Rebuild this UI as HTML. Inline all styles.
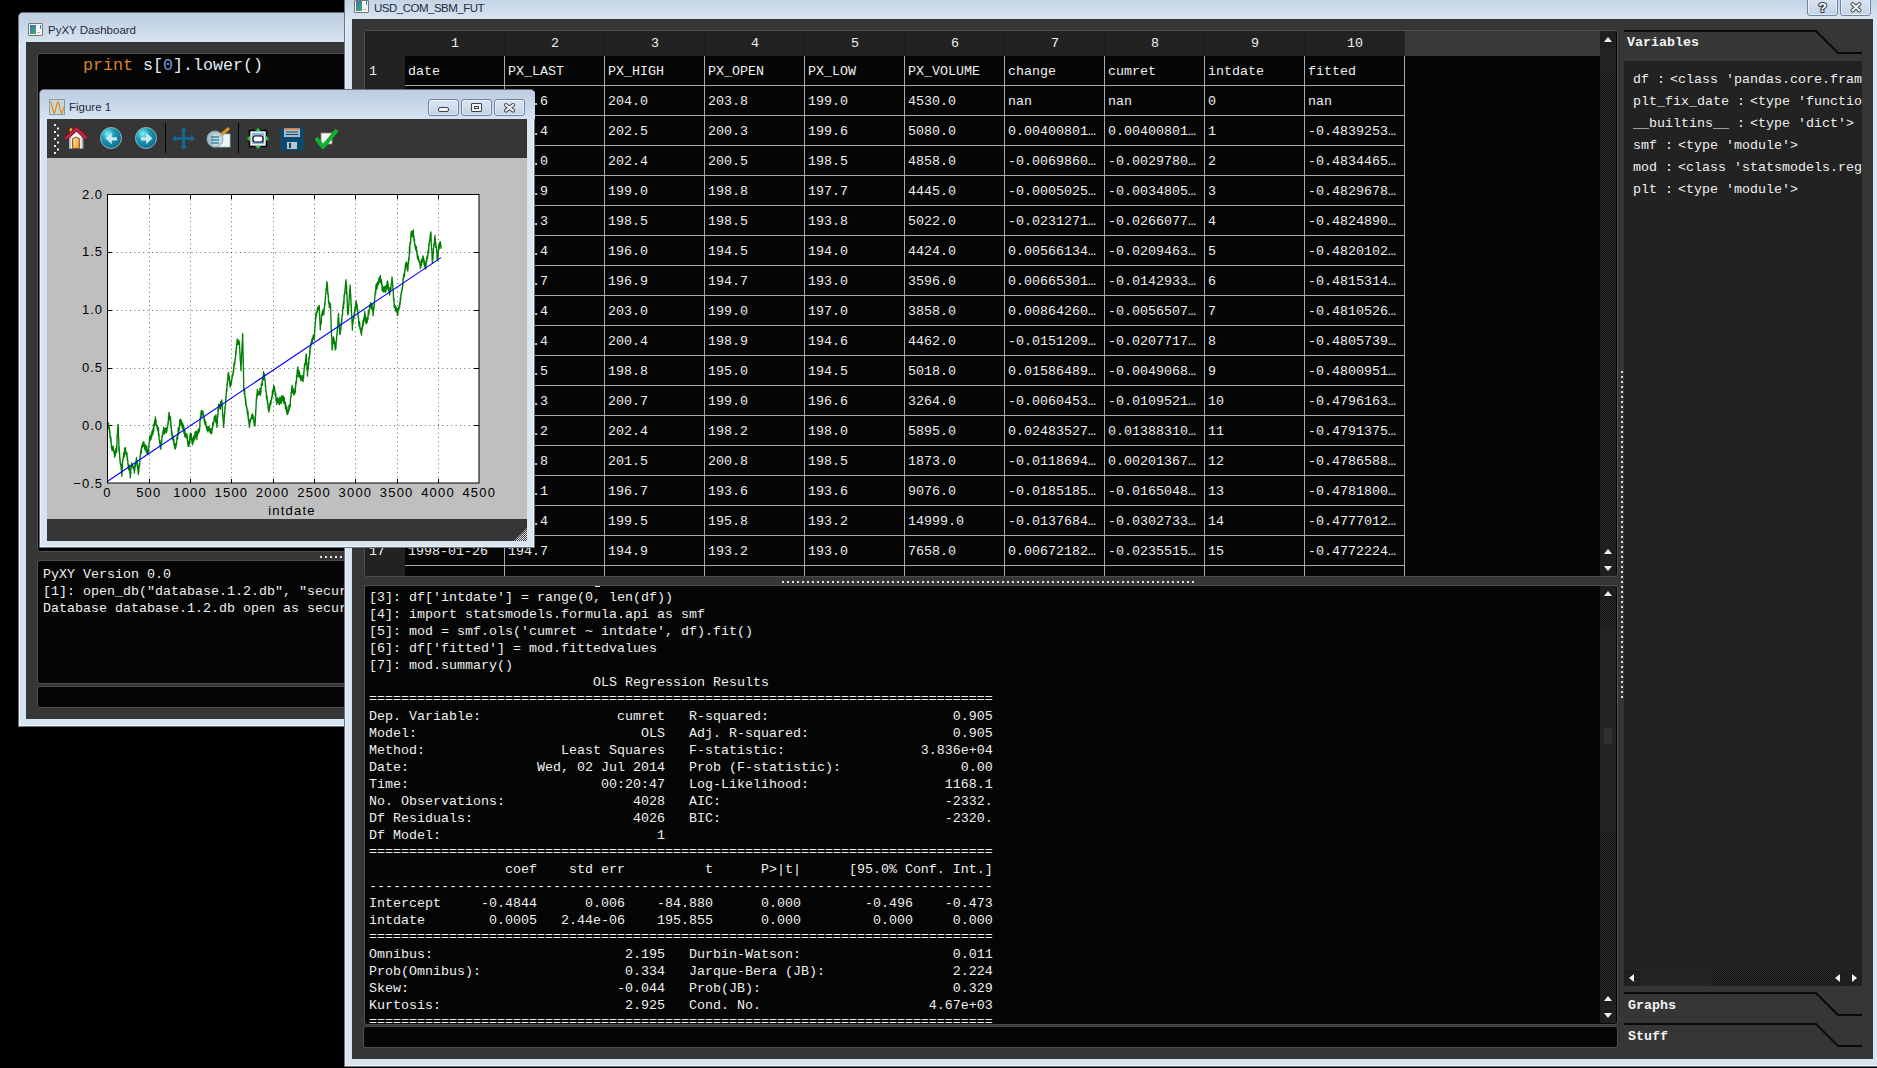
<!DOCTYPE html><html><head><meta charset="utf-8"><style>
*{margin:0;padding:0;box-sizing:border-box}
html,body{width:1877px;height:1068px;overflow:hidden;background:#000;position:relative}
.a{position:absolute}
.mono{font-family:"Liberation Mono", monospace;font-size:13.33px;color:#f0f0f0;white-space:pre;line-height:17px}
.sans{font-family:"Liberation Sans", sans-serif}
.win{position:absolute;border:1px solid #6b7078;border-radius:5px 5px 0 0;
  background:#d7e4f2;box-shadow:inset 0 0 0 1px #eef4fa}
.tbar{position:absolute;left:0;right:0;top:0;background:linear-gradient(#bccde0,#d6e3f1)}
.dark{position:absolute;background:#363636}
.blk{position:absolute;background:#050505;border:1px solid #4e4e4e;border-radius:3px}
.ttl{position:absolute;font-family:"Liberation Sans", sans-serif;font-size:11.5px;line-height:14px;color:#262a40;white-space:pre}
</style></head><body>
<div class="win" style="left:18px;top:12px;width:342px;height:715px;"></div>
<div class="a tbar" style="left:19px;top:13px;width:340px;height:29px;border-radius:4px 4px 0 0"></div>
<div class="a" style="left:26px;top:42px;width:333px;height:677px;background:#363636"></div>
<div class="a" style="left:28px;top:23px;width:15px;height:13px;background:#f4f4f4;border:1px solid #777;border-radius:1px"></div>
<div class="a" style="left:30px;top:25px;width:6px;height:9px;background:linear-gradient(135deg,#3a6fb8,#3fae6a)"></div>
<div class="a" style="left:40px;top:25px;width:1px;height:4px;background:linear-gradient(#2a60c0,#30b050)"></div>
<div class="a" style="left:37px;top:32px;width:3px;height:1px;background:#b0b0b0"></div>
<div class="ttl" style="left:48px;top:23px;">PyXY Dashboard</div>
<div class="blk" style="left:37px;top:53px;width:322px;height:499px;"></div>
<div class="a mono" style="left:83px;top:56px;font-size:16.67px;line-height:20px;color:#d9822b">print</div>
<div class="a mono" style="left:143px;top:56px;font-size:16.67px;line-height:20px;color:#e6eef6">s[</div>
<div class="a mono" style="left:163px;top:56px;font-size:16.67px;line-height:20px;color:#6a9fd8">0</div>
<div class="a mono" style="left:173px;top:56px;font-size:16.67px;line-height:20px;color:#e6eef6">].lower()</div>
<div class="blk" style="left:37px;top:560px;width:322px;height:124px;"></div>
<div class="a mono" style="left:43px;top:566px;">PyXY Version 0.0
[1]: open_db(&quot;database.1.2.db&quot;, &quot;securities&quot;)
Database database.1.2.db open as securities</div>
<div class="blk" style="left:37px;top:686px;width:322px;height:22px;"></div>
<div class="a" style="left:320px;top:556px;width:25px;height:2px;background:repeating-linear-gradient(90deg,#e0e0e0 0 2px,transparent 2px 5px)"></div>
<div class="win" style="left:344px;top:-10px;width:1535px;height:1077px;border-radius:5px 5px 0 0"></div>
<div class="a tbar" style="left:345px;top:-9px;width:1532px;height:28px;"></div>
<div class="a" style="left:352px;top:19px;width:1521px;height:1040px;background:#363636"></div>
<div class="a" style="left:354px;top:0px;width:15px;height:13px;background:#f4f4f4;border:1px solid #777;border-radius:1px"></div>
<div class="a" style="left:356px;top:1px;width:6px;height:10px;background:linear-gradient(135deg,#3a6fb8,#3fae6a)"></div>
<div class="a" style="left:366px;top:1px;width:1px;height:4px;background:linear-gradient(#2a60c0,#30b050)"></div>
<div class="a" style="left:363px;top:9px;width:3px;height:1px;background:#b0b0b0"></div>
<div class="ttl" style="left:374px;top:1px;letter-spacing:-0.5px">USD_COM_SBM_FUT</div>
<div class="a" style="left:364px;top:30px;width:1254px;height:547px;background:#050505;border:1px solid #4e4e4e;border-radius:3px;overflow:hidden"></div>
<div class="a" style="left:365px;top:31px;width:40px;height:25px;background:#222"></div>
<div class="a" style="left:405px;top:31px;width:1000px;height:25px;background:#222"></div>
<div class="a" style="left:1405px;top:31px;width:195px;height:25px;background:#383838"></div>
<div class="a" style="left:365px;top:56px;width:40px;height:520px;background:#222"></div>
<div class="a mono" style="left:451px;top:35px;">1</div>
<div class="a mono" style="left:551px;top:35px;">2</div>
<div class="a" style="left:504px;top:31px;width:1px;height:25px;background:#1c1c1c"></div>
<div class="a mono" style="left:651px;top:35px;">3</div>
<div class="a" style="left:604px;top:31px;width:1px;height:25px;background:#1c1c1c"></div>
<div class="a mono" style="left:751px;top:35px;">4</div>
<div class="a" style="left:704px;top:31px;width:1px;height:25px;background:#1c1c1c"></div>
<div class="a mono" style="left:851px;top:35px;">5</div>
<div class="a" style="left:804px;top:31px;width:1px;height:25px;background:#1c1c1c"></div>
<div class="a mono" style="left:951px;top:35px;">6</div>
<div class="a" style="left:904px;top:31px;width:1px;height:25px;background:#1c1c1c"></div>
<div class="a mono" style="left:1051px;top:35px;">7</div>
<div class="a" style="left:1004px;top:31px;width:1px;height:25px;background:#1c1c1c"></div>
<div class="a mono" style="left:1151px;top:35px;">8</div>
<div class="a" style="left:1104px;top:31px;width:1px;height:25px;background:#1c1c1c"></div>
<div class="a mono" style="left:1251px;top:35px;">9</div>
<div class="a" style="left:1204px;top:31px;width:1px;height:25px;background:#1c1c1c"></div>
<div class="a mono" style="left:1347px;top:35px;">10</div>
<div class="a" style="left:1304px;top:31px;width:1px;height:25px;background:#1c1c1c"></div>
<div class="a mono" style="left:369px;top:63px;">1</div>
<div class="a mono" style="left:369px;top:93px;">2</div>
<div class="a mono" style="left:369px;top:123px;">3</div>
<div class="a mono" style="left:369px;top:153px;">4</div>
<div class="a mono" style="left:369px;top:183px;">5</div>
<div class="a mono" style="left:369px;top:213px;">6</div>
<div class="a mono" style="left:369px;top:243px;">7</div>
<div class="a mono" style="left:369px;top:273px;">8</div>
<div class="a mono" style="left:369px;top:303px;">9</div>
<div class="a mono" style="left:369px;top:333px;">10</div>
<div class="a mono" style="left:369px;top:363px;">11</div>
<div class="a mono" style="left:369px;top:393px;">12</div>
<div class="a mono" style="left:369px;top:423px;">13</div>
<div class="a mono" style="left:369px;top:453px;">14</div>
<div class="a mono" style="left:369px;top:483px;">15</div>
<div class="a mono" style="left:369px;top:513px;">16</div>
<div class="a mono" style="left:369px;top:543px;">17</div>
<div class="a mono" style="left:408px;top:63px;">date</div>
<div class="a mono" style="left:508px;top:63px;">PX_LAST</div>
<div class="a mono" style="left:608px;top:63px;">PX_HIGH</div>
<div class="a mono" style="left:708px;top:63px;">PX_OPEN</div>
<div class="a mono" style="left:808px;top:63px;">PX_LOW</div>
<div class="a mono" style="left:908px;top:63px;">PX_VOLUME</div>
<div class="a mono" style="left:1008px;top:63px;">change</div>
<div class="a mono" style="left:1108px;top:63px;">cumret</div>
<div class="a mono" style="left:1208px;top:63px;">intdate</div>
<div class="a mono" style="left:1308px;top:63px;">fitted</div>
<div class="a mono" style="left:508px;top:93px;">196.6</div>
<div class="a mono" style="left:608px;top:93px;">204.0</div>
<div class="a mono" style="left:708px;top:93px;">203.8</div>
<div class="a mono" style="left:808px;top:93px;">199.0</div>
<div class="a mono" style="left:908px;top:93px;">4530.0</div>
<div class="a mono" style="left:1008px;top:93px;">nan</div>
<div class="a mono" style="left:1108px;top:93px;">nan</div>
<div class="a mono" style="left:1208px;top:93px;">0</div>
<div class="a mono" style="left:1308px;top:93px;">nan</div>
<div class="a mono" style="left:508px;top:123px;">196.4</div>
<div class="a mono" style="left:608px;top:123px;">202.5</div>
<div class="a mono" style="left:708px;top:123px;">200.3</div>
<div class="a mono" style="left:808px;top:123px;">199.6</div>
<div class="a mono" style="left:908px;top:123px;">5080.0</div>
<div class="a mono" style="left:1008px;top:123px;">0.00400801…</div>
<div class="a mono" style="left:1108px;top:123px;">0.00400801…</div>
<div class="a mono" style="left:1208px;top:123px;">1</div>
<div class="a mono" style="left:1308px;top:123px;">-0.4839253…</div>
<div class="a mono" style="left:508px;top:153px;">196.0</div>
<div class="a mono" style="left:608px;top:153px;">202.4</div>
<div class="a mono" style="left:708px;top:153px;">200.5</div>
<div class="a mono" style="left:808px;top:153px;">198.5</div>
<div class="a mono" style="left:908px;top:153px;">4858.0</div>
<div class="a mono" style="left:1008px;top:153px;">-0.0069860…</div>
<div class="a mono" style="left:1108px;top:153px;">-0.0029780…</div>
<div class="a mono" style="left:1208px;top:153px;">2</div>
<div class="a mono" style="left:1308px;top:153px;">-0.4834465…</div>
<div class="a mono" style="left:508px;top:183px;">196.9</div>
<div class="a mono" style="left:608px;top:183px;">199.0</div>
<div class="a mono" style="left:708px;top:183px;">198.8</div>
<div class="a mono" style="left:808px;top:183px;">197.7</div>
<div class="a mono" style="left:908px;top:183px;">4445.0</div>
<div class="a mono" style="left:1008px;top:183px;">-0.0005025…</div>
<div class="a mono" style="left:1108px;top:183px;">-0.0034805…</div>
<div class="a mono" style="left:1208px;top:183px;">3</div>
<div class="a mono" style="left:1308px;top:183px;">-0.4829678…</div>
<div class="a mono" style="left:508px;top:213px;">196.3</div>
<div class="a mono" style="left:608px;top:213px;">198.5</div>
<div class="a mono" style="left:708px;top:213px;">198.5</div>
<div class="a mono" style="left:808px;top:213px;">193.8</div>
<div class="a mono" style="left:908px;top:213px;">5022.0</div>
<div class="a mono" style="left:1008px;top:213px;">-0.0231271…</div>
<div class="a mono" style="left:1108px;top:213px;">-0.0266077…</div>
<div class="a mono" style="left:1208px;top:213px;">4</div>
<div class="a mono" style="left:1308px;top:213px;">-0.4824890…</div>
<div class="a mono" style="left:508px;top:243px;">196.4</div>
<div class="a mono" style="left:608px;top:243px;">196.0</div>
<div class="a mono" style="left:708px;top:243px;">194.5</div>
<div class="a mono" style="left:808px;top:243px;">194.0</div>
<div class="a mono" style="left:908px;top:243px;">4424.0</div>
<div class="a mono" style="left:1008px;top:243px;">0.00566134…</div>
<div class="a mono" style="left:1108px;top:243px;">-0.0209463…</div>
<div class="a mono" style="left:1208px;top:243px;">5</div>
<div class="a mono" style="left:1308px;top:243px;">-0.4820102…</div>
<div class="a mono" style="left:508px;top:273px;">196.7</div>
<div class="a mono" style="left:608px;top:273px;">196.9</div>
<div class="a mono" style="left:708px;top:273px;">194.7</div>
<div class="a mono" style="left:808px;top:273px;">193.0</div>
<div class="a mono" style="left:908px;top:273px;">3596.0</div>
<div class="a mono" style="left:1008px;top:273px;">0.00665301…</div>
<div class="a mono" style="left:1108px;top:273px;">-0.0142933…</div>
<div class="a mono" style="left:1208px;top:273px;">6</div>
<div class="a mono" style="left:1308px;top:273px;">-0.4815314…</div>
<div class="a mono" style="left:508px;top:303px;">196.4</div>
<div class="a mono" style="left:608px;top:303px;">203.0</div>
<div class="a mono" style="left:708px;top:303px;">199.0</div>
<div class="a mono" style="left:808px;top:303px;">197.0</div>
<div class="a mono" style="left:908px;top:303px;">3858.0</div>
<div class="a mono" style="left:1008px;top:303px;">0.00864260…</div>
<div class="a mono" style="left:1108px;top:303px;">-0.0056507…</div>
<div class="a mono" style="left:1208px;top:303px;">7</div>
<div class="a mono" style="left:1308px;top:303px;">-0.4810526…</div>
<div class="a mono" style="left:508px;top:333px;">196.4</div>
<div class="a mono" style="left:608px;top:333px;">200.4</div>
<div class="a mono" style="left:708px;top:333px;">198.9</div>
<div class="a mono" style="left:808px;top:333px;">194.6</div>
<div class="a mono" style="left:908px;top:333px;">4462.0</div>
<div class="a mono" style="left:1008px;top:333px;">-0.0151209…</div>
<div class="a mono" style="left:1108px;top:333px;">-0.0207717…</div>
<div class="a mono" style="left:1208px;top:333px;">8</div>
<div class="a mono" style="left:1308px;top:333px;">-0.4805739…</div>
<div class="a mono" style="left:508px;top:363px;">196.5</div>
<div class="a mono" style="left:608px;top:363px;">198.8</div>
<div class="a mono" style="left:708px;top:363px;">195.0</div>
<div class="a mono" style="left:808px;top:363px;">194.5</div>
<div class="a mono" style="left:908px;top:363px;">5018.0</div>
<div class="a mono" style="left:1008px;top:363px;">0.01586489…</div>
<div class="a mono" style="left:1108px;top:363px;">-0.0049068…</div>
<div class="a mono" style="left:1208px;top:363px;">9</div>
<div class="a mono" style="left:1308px;top:363px;">-0.4800951…</div>
<div class="a mono" style="left:508px;top:393px;">196.3</div>
<div class="a mono" style="left:608px;top:393px;">200.7</div>
<div class="a mono" style="left:708px;top:393px;">199.0</div>
<div class="a mono" style="left:808px;top:393px;">196.6</div>
<div class="a mono" style="left:908px;top:393px;">3264.0</div>
<div class="a mono" style="left:1008px;top:393px;">-0.0060453…</div>
<div class="a mono" style="left:1108px;top:393px;">-0.0109521…</div>
<div class="a mono" style="left:1208px;top:393px;">10</div>
<div class="a mono" style="left:1308px;top:393px;">-0.4796163…</div>
<div class="a mono" style="left:508px;top:423px;">196.2</div>
<div class="a mono" style="left:608px;top:423px;">202.4</div>
<div class="a mono" style="left:708px;top:423px;">198.2</div>
<div class="a mono" style="left:808px;top:423px;">198.0</div>
<div class="a mono" style="left:908px;top:423px;">5895.0</div>
<div class="a mono" style="left:1008px;top:423px;">0.02483527…</div>
<div class="a mono" style="left:1108px;top:423px;">0.01388310…</div>
<div class="a mono" style="left:1208px;top:423px;">11</div>
<div class="a mono" style="left:1308px;top:423px;">-0.4791375…</div>
<div class="a mono" style="left:508px;top:453px;">196.8</div>
<div class="a mono" style="left:608px;top:453px;">201.5</div>
<div class="a mono" style="left:708px;top:453px;">200.8</div>
<div class="a mono" style="left:808px;top:453px;">198.5</div>
<div class="a mono" style="left:908px;top:453px;">1873.0</div>
<div class="a mono" style="left:1008px;top:453px;">-0.0118694…</div>
<div class="a mono" style="left:1108px;top:453px;">0.00201367…</div>
<div class="a mono" style="left:1208px;top:453px;">12</div>
<div class="a mono" style="left:1308px;top:453px;">-0.4786588…</div>
<div class="a mono" style="left:508px;top:483px;">196.1</div>
<div class="a mono" style="left:608px;top:483px;">196.7</div>
<div class="a mono" style="left:708px;top:483px;">193.6</div>
<div class="a mono" style="left:808px;top:483px;">193.6</div>
<div class="a mono" style="left:908px;top:483px;">9076.0</div>
<div class="a mono" style="left:1008px;top:483px;">-0.0185185…</div>
<div class="a mono" style="left:1108px;top:483px;">-0.0165048…</div>
<div class="a mono" style="left:1208px;top:483px;">13</div>
<div class="a mono" style="left:1308px;top:483px;">-0.4781800…</div>
<div class="a mono" style="left:508px;top:513px;">196.4</div>
<div class="a mono" style="left:608px;top:513px;">199.5</div>
<div class="a mono" style="left:708px;top:513px;">195.8</div>
<div class="a mono" style="left:808px;top:513px;">193.2</div>
<div class="a mono" style="left:908px;top:513px;">14999.0</div>
<div class="a mono" style="left:1008px;top:513px;">-0.0137684…</div>
<div class="a mono" style="left:1108px;top:513px;">-0.0302733…</div>
<div class="a mono" style="left:1208px;top:513px;">14</div>
<div class="a mono" style="left:1308px;top:513px;">-0.4777012…</div>
<div class="a mono" style="left:408px;top:543px;">1998-01-26</div>
<div class="a mono" style="left:508px;top:543px;">194.7</div>
<div class="a mono" style="left:608px;top:543px;">194.9</div>
<div class="a mono" style="left:708px;top:543px;">193.2</div>
<div class="a mono" style="left:808px;top:543px;">193.0</div>
<div class="a mono" style="left:908px;top:543px;">7658.0</div>
<div class="a mono" style="left:1008px;top:543px;">0.00672182…</div>
<div class="a mono" style="left:1108px;top:543px;">-0.0235515…</div>
<div class="a mono" style="left:1208px;top:543px;">15</div>
<div class="a mono" style="left:1308px;top:543px;">-0.4772224…</div>
<div class="a" style="left:405px;top:85px;width:1000px;height:1px;background:#a9a9a9"></div>
<div class="a" style="left:405px;top:115px;width:1000px;height:1px;background:#a9a9a9"></div>
<div class="a" style="left:405px;top:145px;width:1000px;height:1px;background:#a9a9a9"></div>
<div class="a" style="left:405px;top:175px;width:1000px;height:1px;background:#a9a9a9"></div>
<div class="a" style="left:405px;top:205px;width:1000px;height:1px;background:#a9a9a9"></div>
<div class="a" style="left:405px;top:235px;width:1000px;height:1px;background:#a9a9a9"></div>
<div class="a" style="left:405px;top:265px;width:1000px;height:1px;background:#a9a9a9"></div>
<div class="a" style="left:405px;top:295px;width:1000px;height:1px;background:#a9a9a9"></div>
<div class="a" style="left:405px;top:325px;width:1000px;height:1px;background:#a9a9a9"></div>
<div class="a" style="left:405px;top:355px;width:1000px;height:1px;background:#a9a9a9"></div>
<div class="a" style="left:405px;top:385px;width:1000px;height:1px;background:#a9a9a9"></div>
<div class="a" style="left:405px;top:415px;width:1000px;height:1px;background:#a9a9a9"></div>
<div class="a" style="left:405px;top:445px;width:1000px;height:1px;background:#a9a9a9"></div>
<div class="a" style="left:405px;top:475px;width:1000px;height:1px;background:#a9a9a9"></div>
<div class="a" style="left:405px;top:505px;width:1000px;height:1px;background:#a9a9a9"></div>
<div class="a" style="left:405px;top:535px;width:1000px;height:1px;background:#a9a9a9"></div>
<div class="a" style="left:405px;top:565px;width:1000px;height:1px;background:#a9a9a9"></div>
<div class="a" style="left:504px;top:56px;width:1px;height:520px;background:#a9a9a9"></div>
<div class="a" style="left:604px;top:56px;width:1px;height:520px;background:#a9a9a9"></div>
<div class="a" style="left:704px;top:56px;width:1px;height:520px;background:#a9a9a9"></div>
<div class="a" style="left:804px;top:56px;width:1px;height:520px;background:#a9a9a9"></div>
<div class="a" style="left:904px;top:56px;width:1px;height:520px;background:#a9a9a9"></div>
<div class="a" style="left:1004px;top:56px;width:1px;height:520px;background:#a9a9a9"></div>
<div class="a" style="left:1104px;top:56px;width:1px;height:520px;background:#a9a9a9"></div>
<div class="a" style="left:1204px;top:56px;width:1px;height:520px;background:#a9a9a9"></div>
<div class="a" style="left:1304px;top:56px;width:1px;height:520px;background:#a9a9a9"></div>
<div class="a" style="left:1404px;top:56px;width:1px;height:520px;background:#a9a9a9"></div>
<div class="a" style="left:1600px;top:31px;width:16px;height:545px;background:#2a2a2a"></div>
<div class="a" style="left:782px;top:581px;width:415px;height:2px;background:repeating-linear-gradient(90deg,#e0e0e0 0 2px,transparent 2px 5px)"></div>
<div class="a" style="left:1600px;top:31px;width:16px;height:545px;background-color:#121212;background-image:repeating-conic-gradient(#2e2e2e 0 25%,#121212 0 50%);background-size:2px 2px"></div>
<svg class="a" style="left:1600px;top:32px" width="16" height="16"><rect x="0" y="0" width="16" height="16" rx="3" fill="#1f1f1f"/><path d="M4,10 L8,5 L12,10 Z" fill="#f2f2f2"/></svg>
<div class="a" style="left:1600px;top:48px;width:16px;height:25px;background:#242424"></div>
<svg class="a" style="left:1600px;top:544px" width="16" height="16"><rect x="0" y="0" width="16" height="16" rx="3" fill="#1f1f1f"/><path d="M4,10 L8,5 L12,10 Z" fill="#f2f2f2"/></svg>
<svg class="a" style="left:1600px;top:560px" width="16" height="16"><rect x="0" y="0" width="16" height="16" rx="3" fill="#1f1f1f"/><path d="M4,6 L8,11 L12,6 Z" fill="#f2f2f2"/></svg>
<div class="blk" style="left:364px;top:585px;width:1254px;height:440px;"></div>
<div class="a" style="left:365px;top:586px;width:1235px;height:437px;overflow:hidden">
<div class="a mono" style="left:4px;top:-14px">
[3]: df[&#x27;intdate&#x27;] = range(0, len(df))
[4]: import statsmodels.formula.api as smf
[5]: mod = smf.ols(&#x27;cumret ~ intdate&#x27;, df).fit()
[6]: df[&#x27;fitted&#x27;] = mod.fittedvalues
[7]: mod.summary()
                            OLS Regression Results                            
<span style="position:relative;top:-1px">==============================================================================</span>
Dep. Variable:                 cumret   R-squared:                       0.905
Model:                            OLS   Adj. R-squared:                  0.905
Method:                 Least Squares   F-statistic:                 3.836e+04
Date:                Wed, 02 Jul 2014   Prob (F-statistic):               0.00
Time:                        00:20:47   Log-Likelihood:                 1168.1
No. Observations:                4028   AIC:                            -2332.
Df Residuals:                    4026   BIC:                            -2320.
Df Model:                           1                                         
<span style="position:relative;top:-1px">==============================================================================</span>
                 coef    std err          t      P&gt;|t|      [95.0% Conf. Int.]
------------------------------------------------------------------------------
Intercept     -0.4844      0.006    -84.880      0.000        -0.496    -0.473
intdate        0.0005   2.44e-06    195.855      0.000         0.000     0.000
<span style="position:relative;top:-1px">==============================================================================</span>
Omnibus:                        2.195   Durbin-Watson:                   0.011
Prob(Omnibus):                  0.334   Jarque-Bera (JB):                2.224
Skew:                          -0.044   Prob(JB):                        0.329
Kurtosis:                       2.925   Cond. No.                     4.67e+03
<span style="position:relative;top:-1px">==============================================================================</span></div>
</div>
<div class="a" style="left:1600px;top:586px;width:16px;height:437px;background-color:#121212;background-image:repeating-conic-gradient(#2e2e2e 0 25%,#121212 0 50%);background-size:2px 2px"></div>
<svg class="a" style="left:1600px;top:586px" width="16" height="16"><rect x="0" y="0" width="16" height="16" rx="3" fill="#1f1f1f"/><path d="M4,10 L8,5 L12,10 Z" fill="#f2f2f2"/></svg>
<div class="a" style="left:1600px;top:628px;width:16px;height:204px;background:#242424"></div>
<div class="a" style="left:1604px;top:728px;width:8px;height:16px;background-image:repeating-conic-gradient(#3a3a3a 0 25%,#242424 0 50%);background-size:2px 2px"></div>
<svg class="a" style="left:1600px;top:991px" width="16" height="16"><rect x="0" y="0" width="16" height="16" rx="3" fill="#1f1f1f"/><path d="M4,10 L8,5 L12,10 Z" fill="#f2f2f2"/></svg>
<svg class="a" style="left:1600px;top:1007px" width="16" height="16"><rect x="0" y="0" width="16" height="16" rx="3" fill="#1f1f1f"/><path d="M4,6 L8,11 L12,6 Z" fill="#f2f2f2"/></svg>
<div class="blk" style="left:363px;top:1026px;width:1255px;height:22px;"></div>
<div class="a" style="left:595px;top:586px;width:5px;height:1px;background:#e8e8e8"></div>
<div class="a" style="left:1621px;top:371px;width:2px;height:330px;background:repeating-linear-gradient(180deg,#e0e0e0 0 2px,transparent 2px 5px)"></div>
<svg class="a" style="left:1624px;top:29px" width="240" height="26"><path d="M0,2 L192,2 L214,24 L238,24" stroke="#0a0a0a" stroke-width="2" fill="none"/></svg>
<div class="a mono" style="left:1627px;top:34px;font-weight:bold;color:#f4f4f4">Variables</div>
<div class="a" style="left:1624px;top:61px;width:238px;height:909px;background:#222"></div>
<div class="a" style="left:1624px;top:61px;width:238px;height:909px;overflow:hidden">
<div class="a mono" style="left:9px;top:10px">df :</div>
<div class="a mono" style="left:46px;top:10px">&lt;class &#x27;pandas.core.frame.DataFrame&#x27;&gt;</div>
<div class="a mono" style="left:9px;top:32px">plt_fix_date :</div>
<div class="a mono" style="left:126px;top:32px">&lt;type &#x27;function&#x27;&gt;</div>
<div class="a mono" style="left:9px;top:54px">__builtins__ :</div>
<div class="a mono" style="left:126px;top:54px">&lt;type &#x27;dict&#x27;&gt;</div>
<div class="a mono" style="left:9px;top:76px">smf :</div>
<div class="a mono" style="left:54px;top:76px">&lt;type &#x27;module&#x27;&gt;</div>
<div class="a mono" style="left:9px;top:98px">mod :</div>
<div class="a mono" style="left:54px;top:98px">&lt;class &#x27;statsmodels.regression.linear_model.RegressionResultsWrapper&#x27;&gt;</div>
<div class="a mono" style="left:9px;top:120px">plt :</div>
<div class="a mono" style="left:54px;top:120px">&lt;type &#x27;module&#x27;&gt;</div>
</div>
<div class="a" style="left:1624px;top:970px;width:238px;height:16px;background-color:#121212;background-image:repeating-conic-gradient(#2e2e2e 0 25%,#121212 0 50%);background-size:2px 2px"></div>
<svg class="a" style="left:1624px;top:970px" width="16" height="16"><rect x="0" y="0" width="16" height="16" rx="3" fill="#1f1f1f"/><path d="M10,4 L5,8 L10,12 Z" fill="#f2f2f2"/></svg>
<div class="a" style="left:1640px;top:970px;width:71px;height:16px;background:#242424"></div>
<svg class="a" style="left:1830px;top:970px" width="16" height="16"><rect x="0" y="0" width="16" height="16" rx="3" fill="#1f1f1f"/><path d="M10,4 L5,8 L10,12 Z" fill="#f2f2f2"/></svg>
<svg class="a" style="left:1846px;top:970px" width="16" height="16"><rect x="0" y="0" width="16" height="16" rx="3" fill="#1f1f1f"/><path d="M6,4 L11,8 L6,12 Z" fill="#f2f2f2"/></svg>
<svg class="a" style="left:1624px;top:991px" width="240" height="26"><path d="M0,2 L192,2 L214,24 L238,24" stroke="#0a0a0a" stroke-width="2" fill="none"/></svg>
<div class="a mono" style="left:1628px;top:997px;font-weight:bold;color:#f4f4f4">Graphs</div>
<svg class="a" style="left:1624px;top:1022px" width="240" height="26"><path d="M0,2 L192,2 L214,24 L238,24" stroke="#0a0a0a" stroke-width="2" fill="none"/></svg>
<div class="a mono" style="left:1628px;top:1028px;font-weight:bold;color:#f4f4f4">Stuff</div>
<div class="a" style="left:1807px;top:-3px;width:31px;height:19px;border:1px solid #6f84a4;border-radius:3px;background:linear-gradient(#dbe6f3,#c3d2e4);box-shadow:inset 0 0 0 1px rgba(255,255,255,.5)"><svg width="29" height="17" style="position:absolute;left:0;top:0"><text x="14.5" y="13.5" text-anchor="middle" font-family="Liberation Sans" font-weight="bold" font-size="13.5" fill="#ffffff" stroke="#3a3f4a" stroke-width="2.2" stroke-linejoin="round" paint-order="stroke">?</text></svg></div>
<div class="a" style="left:1840px;top:-3px;width:31px;height:19px;border:1px solid #6f84a4;border-radius:3px;background:linear-gradient(#dbe6f3,#c3d2e4);box-shadow:inset 0 0 0 1px rgba(255,255,255,.5)"><svg width="29" height="17" style="position:absolute;left:0;top:0"><path d="M11.5,6 L18.5,12.5 M18.5,6 L11.5,12.5" stroke="#3c414b" stroke-width="4" stroke-linecap="round"/><path d="M11.5,6 L18.5,12.5 M18.5,6 L11.5,12.5" stroke="#f4f4f4" stroke-width="2.2" stroke-linecap="round"/></svg></div>
<div class="win" style="left:39px;top:89px;width:496px;height:459px;"></div>
<div class="a tbar" style="left:40px;top:90px;width:495px;height:29px;border-radius:4px 4px 0 0"></div>
<div class="a" style="left:49px;top:99px;width:16px;height:16px;background:#c9d6dc;border:1px solid #8a9aa2"></div>
<svg class="a" style="left:50px;top:100px" width="14" height="14"><polyline points="0.50,2.00 0.82,2.21 1.15,2.81 1.48,3.77 1.80,5.00 2.12,6.43 2.45,7.93 2.77,9.40 3.10,10.73 3.42,11.82 3.75,12.58 4.08,12.96 4.40,12.93 4.72,12.49 5.05,11.68 5.38,10.56 5.70,9.20 6.03,7.72 6.35,6.22 6.67,4.81 7.00,3.61 7.33,2.70 7.65,2.15 7.97,2.00 8.30,2.27 8.62,2.93 8.95,3.93 9.28,5.20 9.60,6.64 9.93,8.15 10.25,9.60 10.57,10.91 10.90,11.95 11.22,12.66 11.55,12.98 11.88,12.89 12.20,12.40 12.53,11.54 12.85,10.37 13.18,8.99 13.50,7.50" stroke="#e08a10" stroke-width="1.2" fill="none"/></svg>
<div class="ttl a" style="left:69px;top:100px">Figure 1</div>
<div class="a" style="left:428px;top:99px;width:31px;height:17px;border:1px solid #6f84a4;border-radius:3px;background:linear-gradient(#dbe6f3,#c3d2e4);box-shadow:inset 0 0 0 1px rgba(255,255,255,.5)"><div style="position:absolute;left:9px;top:7px;width:11px;height:5px;background:#f2f2f2;border:1px solid #3c414b;border-radius:2px"></div></div>
<div class="a" style="left:461px;top:99px;width:31px;height:17px;border:1px solid #6f84a4;border-radius:3px;background:linear-gradient(#dbe6f3,#c3d2e4);box-shadow:inset 0 0 0 1px rgba(255,255,255,.5)"><div style="position:absolute;left:9px;top:3px;width:11px;height:9px;background:#f2f2f2;border:1px solid #3c414b;border-radius:1px"><div style="position:absolute;left:2px;top:2px;width:5px;height:3px;border:1px solid #3c414b"></div></div></div>
<div class="a" style="left:494px;top:99px;width:31px;height:17px;border:1px solid #6f84a4;border-radius:3px;background:linear-gradient(#dbe6f3,#c3d2e4);box-shadow:inset 0 0 0 1px rgba(255,255,255,.5)"><svg width="29" height="15" style="position:absolute;left:0;top:0"><path d="M11,5 L18,10.5 M18,5 L11,10.5" stroke="#3c414b" stroke-width="4" stroke-linecap="round"/><path d="M11,5 L18,10.5 M18,5 L11,10.5" stroke="#f4f4f4" stroke-width="2.2" stroke-linecap="round"/></svg></div>
<div class="a" style="left:47px;top:119px;width:480px;height:39px;background:#363636"></div>
<div class="a" style="left:47px;top:158px;width:480px;height:361px;background:#bfbfbf"></div>
<div class="a" style="left:47px;top:519px;width:480px;height:22px;background:#363636"></div>
<svg class="a" style="left:513px;top:527px" width="14" height="14"><defs><pattern id="gp" width="2" height="2" patternUnits="userSpaceOnUse"><rect width="1" height="1" fill="#e8e8e8"/><rect x="1" y="1" width="1" height="1" fill="#e8e8e8"/></pattern></defs><path d="M14,1 L14,14 L1,14 Z" fill="url(#gp)"/></svg>
<svg class="a" style="left:52px;top:122px" width="10" height="34"><g fill="#f0f0f0"><rect x="2" y="2.0" width="2" height="2"/><rect x="5" y="5.5" width="2" height="2"/><rect x="2" y="9.0" width="2" height="2"/><rect x="5" y="12.5" width="2" height="2"/><rect x="2" y="16.0" width="2" height="2"/><rect x="5" y="19.5" width="2" height="2"/><rect x="2" y="23.0" width="2" height="2"/><rect x="5" y="26.5" width="2" height="2"/><rect x="2" y="30.0" width="2" height="2"/></g></svg>
<svg class="a" style="left:64px;top:126px" width="24" height="25"><defs><linearGradient id="hw" x1="0" x2="1"><stop offset="0" stop-color="#9aa8a8"/><stop offset="0.2" stop-color="#f8f8f8"/><stop offset="0.8" stop-color="#f0f0f0"/><stop offset="1" stop-color="#8a9898"/></linearGradient><linearGradient id="hd" x1="0" y1="0" x2="1" y2="1"><stop offset="0" stop-color="#f8dca0"/><stop offset="1" stop-color="#f0a818"/></linearGradient></defs><rect x="5.3" y="2" width="3.3" height="6" fill="#f4c040" stroke="#7a1010" stroke-width="0.7"/><path d="M5,11.8 L12.5,5.3 L19.5,11.8 L19.5,23 L5,23 Z" fill="url(#hw)"/><rect x="5" y="22.6" width="14.5" height="1" fill="#204850"/><path d="M8.6,22.6 L8.6,12.5 Q12,9.8 15.3,12.5 L15.3,22.6 Z" fill="url(#hd)" stroke="#7a2010" stroke-width="0.8"/><path d="M1.5,12.8 L12.5,2.8 L22.5,12.1" stroke="#6a0818" stroke-width="4.2" fill="none" stroke-linejoin="miter"/><path d="M1.5,12.8 L12.5,2.8 L22.5,12.1" stroke="#c02848" stroke-width="2.8" fill="none" stroke-linejoin="miter"/></svg>
<svg class="a" style="left:99.6px;top:127px" width="22" height="22"><defs><radialGradient id="g110" cx="0.35" cy="0.3" r="0.8"><stop offset="0" stop-color="#7ef8ff"/><stop offset="0.4" stop-color="#1a98b2"/><stop offset="1" stop-color="#08688a"/></radialGradient></defs><circle cx="11" cy="11" r="10.5" fill="url(#g110)" stroke="#9cbccc" stroke-width="0.9"/><path d="M5.5,11.3 L11.8,5.8 L11.8,10.2 L17,10.2 L17,13.4 L11.8,13.4 L11.8,17.2 Z" fill="#cfe8ee"/></svg>
<svg class="a" style="left:135.0px;top:127px" width="22" height="22"><defs><radialGradient id="g146" cx="0.35" cy="0.3" r="0.8"><stop offset="0" stop-color="#7ef8ff"/><stop offset="0.4" stop-color="#1a98b2"/><stop offset="1" stop-color="#08688a"/></radialGradient></defs><circle cx="11" cy="11" r="10.5" fill="url(#g146)" stroke="#9cbccc" stroke-width="0.9"/><path d="M17.5,11.3 L11.2,5.8 L11.2,10.2 L6,10.2 L6,13.4 L11.2,13.4 L11.2,17.2 Z" fill="#cfe8ee"/></svg>
<div class="a" style="left:165px;top:123px;width:1px;height:30px;background:#000"></div>
<div class="a" style="left:238px;top:123px;width:1px;height:30px;background:#000"></div>
<svg class="a" style="left:172px;top:127px" width="24" height="23"><path d="M11.5,0 L15,4 L13,4 L13,10 L19,10 L19,8 L23,11.5 L19,15 L19,13 L13,13 L13,19 L15,19 L11.5,23 L8,19 L10,19 L10,13 L4,13 L4,15 L0,11.5 L4,8 L4,10 L10,10 L10,4 L8,4 Z" fill="#14688e"/></svg>
<svg class="a" style="left:206px;top:127px" width="26" height="22"><rect x="7" y="7" width="17" height="13" fill="#f2f4f8" stroke="#8cc" stroke-width="0.8"/><path d="M14,9 L22,2" stroke="#e0902a" stroke-width="3.2" stroke-linecap="round"/><circle cx="9" cy="12" r="8" fill="#bcd4dc" fill-opacity="0.85" stroke="#88a8b0" stroke-width="1"/><path d="M5,10 H13 M5,13 H13 M5,16 H13" stroke="#3c8aa0" stroke-width="1.4"/></svg>
<svg class="a" style="left:247px;top:128px" width="22" height="21"><rect x="2.5" y="2.5" width="17" height="16" fill="#eaeaea" stroke="#000" stroke-width="1.5"/><rect x="5" y="5" width="12" height="11" fill="#8ab8e8"/><rect x="6" y="8" width="10" height="6" rx="2" fill="#fff" stroke="#000" stroke-width="1.2"/><path d="M11,0 L14,3 L8,3 Z M11,21 L14,18 L8,18 Z M0,10.5 L3,7.5 L3,13.5 Z M22,10.5 L19,7.5 L19,13.5 Z" fill="#22c840"/></svg>
<svg class="a" style="left:280px;top:127px" width="24" height="24"><rect x="0.5" y="0.5" width="23" height="23" rx="3" fill="#0b4a70"/><rect x="4" y="1" width="16" height="9" fill="#a8bcc8"/><rect x="4" y="1" width="16" height="1.5" fill="#d08040"/><path d="M6,5 H18 M6,7.5 H18" stroke="#1a4a70" stroke-width="1"/><rect x="7" y="15" width="10" height="7" fill="#b8c8d0"/><rect x="9" y="16" width="2" height="5" fill="#123a5a"/></svg>
<svg class="a" style="left:315px;top:126px" width="24" height="24"><rect x="6" y="7" width="11" height="11" fill="#f4f4f4" stroke="#888" stroke-width="0.8"/><path d="M1,12 L8,21 L22,4" stroke="#10b030" stroke-width="4.2" fill="none" stroke-linejoin="round"/></svg>
<svg class="a" style="left:47px;top:158px" width="480" height="361" shape-rendering="auto"><rect x="60.5" y="36.5" width="371.5" height="288.5" fill="#fff"/><line x1="102.5" y1="37" x2="102.5" y2="325" stroke="#000" stroke-width="1" stroke-dasharray="1,3.4" stroke-opacity="0.6"/><line x1="102.5" y1="325" x2="102.5" y2="321" stroke="#000"/><line x1="102.5" y1="37" x2="102.5" y2="41" stroke="#000"/><line x1="143.5" y1="37" x2="143.5" y2="325" stroke="#000" stroke-width="1" stroke-dasharray="1,3.4" stroke-opacity="0.6"/><line x1="143.5" y1="325" x2="143.5" y2="321" stroke="#000"/><line x1="143.5" y1="37" x2="143.5" y2="41" stroke="#000"/><line x1="184.5" y1="37" x2="184.5" y2="325" stroke="#000" stroke-width="1" stroke-dasharray="1,3.4" stroke-opacity="0.6"/><line x1="184.5" y1="325" x2="184.5" y2="321" stroke="#000"/><line x1="184.5" y1="37" x2="184.5" y2="41" stroke="#000"/><line x1="226.5" y1="37" x2="226.5" y2="325" stroke="#000" stroke-width="1" stroke-dasharray="1,3.4" stroke-opacity="0.6"/><line x1="226.5" y1="325" x2="226.5" y2="321" stroke="#000"/><line x1="226.5" y1="37" x2="226.5" y2="41" stroke="#000"/><line x1="267.5" y1="37" x2="267.5" y2="325" stroke="#000" stroke-width="1" stroke-dasharray="1,3.4" stroke-opacity="0.6"/><line x1="267.5" y1="325" x2="267.5" y2="321" stroke="#000"/><line x1="267.5" y1="37" x2="267.5" y2="41" stroke="#000"/><line x1="308.5" y1="37" x2="308.5" y2="325" stroke="#000" stroke-width="1" stroke-dasharray="1,3.4" stroke-opacity="0.6"/><line x1="308.5" y1="325" x2="308.5" y2="321" stroke="#000"/><line x1="308.5" y1="37" x2="308.5" y2="41" stroke="#000"/><line x1="350.5" y1="37" x2="350.5" y2="325" stroke="#000" stroke-width="1" stroke-dasharray="1,3.4" stroke-opacity="0.6"/><line x1="350.5" y1="325" x2="350.5" y2="321" stroke="#000"/><line x1="350.5" y1="37" x2="350.5" y2="41" stroke="#000"/><line x1="391.5" y1="37" x2="391.5" y2="325" stroke="#000" stroke-width="1" stroke-dasharray="1,3.4" stroke-opacity="0.6"/><line x1="391.5" y1="325" x2="391.5" y2="321" stroke="#000"/><line x1="391.5" y1="37" x2="391.5" y2="41" stroke="#000"/><line x1="61" y1="267.5" x2="432" y2="267.5" stroke="#000" stroke-width="1" stroke-dasharray="1,3.4" stroke-opacity="0.6"/><line x1="61" y1="267.5" x2="65" y2="267.5" stroke="#000"/><line x1="427" y1="267.5" x2="432" y2="267.5" stroke="#000"/><line x1="61" y1="210.5" x2="432" y2="210.5" stroke="#000" stroke-width="1" stroke-dasharray="1,3.4" stroke-opacity="0.6"/><line x1="61" y1="210.5" x2="65" y2="210.5" stroke="#000"/><line x1="427" y1="210.5" x2="432" y2="210.5" stroke="#000"/><line x1="61" y1="152.5" x2="432" y2="152.5" stroke="#000" stroke-width="1" stroke-dasharray="1,3.4" stroke-opacity="0.6"/><line x1="61" y1="152.5" x2="65" y2="152.5" stroke="#000"/><line x1="427" y1="152.5" x2="432" y2="152.5" stroke="#000"/><line x1="61" y1="94.5" x2="432" y2="94.5" stroke="#000" stroke-width="1" stroke-dasharray="1,3.4" stroke-opacity="0.6"/><line x1="61" y1="94.5" x2="65" y2="94.5" stroke="#000"/><line x1="427" y1="94.5" x2="432" y2="94.5" stroke="#000"/><clipPath id="ax"><rect x="61" y="36" width="371" height="289"/></clipPath><path d="M60.90,265.60 L61.01,267.52 L61.12,267.16 L61.24,267.76 L61.35,267.77 L61.46,264.96 L61.58,269.13 L61.69,269.79 L61.80,270.55 L61.90,269.37 L62.00,270.18 L62.10,269.82 L62.20,269.24 L62.30,269.41 L62.40,270.78 L62.50,274.46 L62.60,271.78 L62.70,274.29 L62.80,275.54 L62.90,273.02 L63.00,277.11 L63.10,280.07 L63.20,276.56 L63.30,279.47 L63.40,280.10 L63.50,279.57 L63.61,283.86 L63.71,283.13 L63.81,279.13 L63.92,279.30 L64.03,284.61 L64.13,284.14 L64.23,285.03 L64.34,288.99 L64.44,289.85 L64.55,288.25 L64.66,289.35 L64.76,289.87 L64.86,291.93 L64.97,290.31 L65.07,290.18 L65.18,290.50 L65.28,288.70 L65.39,292.36 L65.49,291.59 L65.60,291.69 L65.70,289.51 L65.80,291.93 L65.90,289.04 L66.00,291.63 L66.10,287.97 L66.20,289.55 L66.30,291.13 L66.40,293.09 L66.50,293.26 L66.60,292.65 L66.70,292.78 L66.80,293.43 L66.90,294.38 L67.00,294.19 L67.10,294.72 L67.20,295.16 L67.30,295.17 L67.40,296.58 L67.50,296.00 L67.60,298.98 L67.70,297.57 L67.80,296.42 L67.90,295.92 L68.00,296.62 L68.10,298.19 L68.20,296.12 L68.30,291.97 L68.40,296.06 L68.50,296.38 L68.60,292.06 L68.70,293.48 L68.80,294.87 L68.90,294.48 L69.00,294.79 L69.10,290.02 L69.20,291.83 L69.30,291.15 L69.40,293.67 L69.50,294.21 L69.60,287.83 L69.70,293.05 L69.80,288.73 L69.90,287.63 L70.00,283.78 L70.10,281.34 L70.20,277.61 L70.31,276.26 L70.42,276.39 L70.53,272.35 L70.64,270.79 L70.75,274.20 L70.86,269.73 L70.97,268.77 L71.08,266.53 L71.19,269.29 L71.30,267.52 L71.40,269.86 L71.50,276.88 L71.60,279.93 L71.70,281.40 L71.80,283.08 L71.90,293.01 L72.01,288.11 L72.11,291.33 L72.22,290.08 L72.33,295.05 L72.43,295.90 L72.54,294.61 L72.64,296.91 L72.75,299.78 L72.86,300.23 L72.96,302.71 L73.07,300.89 L73.17,303.87 L73.28,305.33 L73.39,306.29 L73.49,304.44 L73.60,307.32 L73.70,306.78 L73.80,307.94 L73.90,306.08 L74.00,306.23 L74.10,307.66 L74.20,311.20 L74.30,308.12 L74.40,310.78 L74.50,313.94 L74.60,314.87 L74.70,315.88 L74.80,318.21 L74.91,312.43 L75.02,314.63 L75.12,311.12 L75.23,307.66 L75.34,311.09 L75.45,308.12 L75.56,303.52 L75.67,303.97 L75.77,303.67 L75.88,301.35 L75.99,301.38 L76.10,300.42 L76.20,299.02 L76.30,299.23 L76.40,300.28 L76.50,298.84 L76.60,298.31 L76.70,295.28 L76.80,296.25 L76.90,298.36 L77.00,296.45 L77.10,294.19 L77.20,294.82 L77.30,298.47 L77.40,295.91 L77.50,296.06 L77.60,290.11 L77.70,294.79 L77.80,295.16 L77.90,296.34 L78.00,294.25 L78.10,293.49 L78.20,293.28 L78.31,290.26 L78.41,292.82 L78.52,289.61 L78.62,291.55 L78.72,293.61 L78.83,295.80 L78.94,293.32 L79.04,294.06 L79.14,295.35 L79.25,295.57 L79.36,295.96 L79.46,294.97 L79.56,295.67 L79.67,298.20 L79.78,296.61 L79.88,294.73 L79.98,296.28 L80.09,298.05 L80.19,299.21 L80.30,300.34 L80.40,302.28 L80.50,299.87 L80.60,301.83 L80.70,303.04 L80.80,302.39 L80.90,305.72 L81.00,305.91 L81.10,306.91 L81.20,306.14 L81.30,310.34 L81.40,307.88 L81.50,306.38 L81.60,306.92 L81.70,311.77 L81.80,307.35 L81.90,308.24 L82.00,308.42 L82.10,308.55 L82.20,307.21 L82.30,309.06 L82.40,309.50 L82.50,311.61 L82.60,312.03 L82.70,311.64 L82.80,314.42 L82.90,315.02 L83.00,315.15 L83.10,315.92 L83.20,317.11 L83.30,319.73 L83.41,317.16 L83.51,313.69 L83.62,316.96 L83.73,315.69 L83.83,310.54 L83.94,311.47 L84.04,311.45 L84.15,307.57 L84.26,307.18 L84.36,307.66 L84.47,307.54 L84.57,304.90 L84.68,307.51 L84.79,307.51 L84.89,308.11 L85.00,307.05 L85.10,307.65 L85.20,308.71 L85.30,306.09 L85.40,307.92 L85.50,307.64 L85.60,308.60 L85.70,309.22 L85.80,308.70 L85.90,308.22 L86.00,308.77 L86.10,308.59 L86.20,310.23 L86.30,309.89 L86.40,308.63 L86.50,308.09 L86.60,309.55 L86.70,309.87 L86.80,309.97 L86.90,311.86 L87.00,311.34 L87.10,312.57 L87.20,312.01 L87.30,310.47 L87.40,315.04 L87.50,310.62 L87.60,310.68 L87.71,310.37 L87.81,312.01 L87.92,308.13 L88.03,305.69 L88.13,306.69 L88.23,306.79 L88.34,307.64 L88.44,304.86 L88.55,308.67 L88.66,308.25 L88.76,305.60 L88.87,305.54 L88.97,303.65 L89.07,305.98 L89.18,301.41 L89.28,303.44 L89.39,300.35 L89.50,299.43 L89.60,302.08 L89.70,304.14 L89.81,302.25 L89.91,303.01 L90.02,303.69 L90.12,304.52 L90.23,303.83 L90.33,306.98 L90.44,306.04 L90.54,308.35 L90.65,310.86 L90.75,311.67 L90.86,311.66 L90.97,310.84 L91.07,312.98 L91.17,311.53 L91.28,316.25 L91.38,316.44 L91.49,314.96 L91.59,314.09 L91.70,313.35 L91.80,313.86 L91.90,308.52 L92.00,309.07 L92.10,309.57 L92.20,307.23 L92.30,307.34 L92.40,308.29 L92.50,305.25 L92.60,307.72 L92.70,305.63 L92.80,303.52 L92.90,302.79 L93.00,300.83 L93.10,297.98 L93.20,298.77 L93.30,298.58 L93.40,296.01 L93.51,297.38 L93.61,293.15 L93.72,295.65 L93.82,294.01 L93.93,295.29 L94.04,294.12 L94.14,290.71 L94.25,291.84 L94.36,294.61 L94.46,290.99 L94.57,290.14 L94.68,288.52 L94.78,288.00 L94.89,289.62 L94.99,289.88 L95.10,288.14 L95.20,287.03 L95.30,288.79 L95.40,288.85 L95.50,285.86 L95.60,288.40 L95.70,287.65 L95.80,288.57 L95.90,285.58 L96.00,284.44 L96.10,287.57 L96.20,287.08 L96.30,285.70 L96.40,287.49 L96.50,285.98 L96.60,285.37 L96.70,286.90 L96.80,283.58 L96.90,285.51 L97.00,287.28 L97.10,288.33 L97.20,287.28 L97.30,287.49 L97.40,286.04 L97.50,287.89 L97.60,290.80 L97.70,286.23 L97.80,291.63 L97.90,289.82 L98.00,287.77 L98.10,290.99 L98.20,290.57 L98.30,287.03 L98.40,290.60 L98.50,289.12 L98.60,290.50 L98.70,289.90 L98.80,291.02 L98.90,289.12 L99.00,293.12 L99.10,292.33 L99.20,292.14 L99.30,294.16 L99.40,293.08 L99.50,293.82 L99.60,290.25 L99.70,291.31 L99.80,288.00 L99.90,291.19 L100.00,294.20 L100.10,295.25 L100.20,292.62 L100.30,292.75 L100.40,294.87 L100.50,291.70 L100.60,293.74 L100.70,295.24 L100.80,292.89 L100.90,294.64 L101.00,292.35 L101.10,294.09 L101.20,293.64 L101.30,294.40 L101.40,295.89 L101.51,291.88 L101.62,291.32 L101.73,289.75 L101.84,288.85 L101.95,288.67 L102.05,286.37 L102.16,284.56 L102.27,284.37 L102.38,284.81 L102.49,280.09 L102.60,279.65 L102.70,278.61 L102.80,279.67 L102.90,279.59 L103.00,278.12 L103.10,282.03 L103.20,279.96 L103.30,277.10 L103.40,280.38 L103.50,282.17 L103.60,277.84 L103.70,281.54 L103.80,279.87 L103.90,280.19 L104.00,280.62 L104.10,281.11 L104.20,278.06 L104.30,279.55 L104.40,276.32 L104.50,277.73 L104.60,275.01 L104.70,276.19 L104.80,278.39 L104.90,275.79 L105.00,274.50 L105.10,272.85 L105.20,272.84 L105.30,274.18 L105.40,275.61 L105.50,275.40 L105.60,276.43 L105.70,274.97 L105.80,276.66 L105.90,272.42 L106.00,273.18 L106.10,270.15 L106.20,272.77 L106.30,273.43 L106.40,271.62 L106.50,270.03 L106.60,274.06 L106.70,270.59 L106.80,266.70 L106.90,270.13 L107.00,265.80 L107.10,268.94 L107.20,266.23 L107.30,266.58 L107.40,267.47 L107.50,265.66 L107.60,263.62 L107.70,262.17 L107.80,266.18 L107.90,264.42 L108.00,262.90 L108.10,264.54 L108.20,264.14 L108.30,263.40 L108.40,258.95 L108.50,262.65 L108.60,263.78 L108.71,265.49 L108.81,266.30 L108.92,263.83 L109.02,261.58 L109.12,267.20 L109.23,267.66 L109.33,266.91 L109.44,266.58 L109.54,267.71 L109.64,267.51 L109.75,266.65 L109.85,268.06 L109.96,268.10 L110.06,268.54 L110.16,267.71 L110.27,270.79 L110.37,267.76 L110.48,270.06 L110.58,268.50 L110.68,271.03 L110.79,272.53 L110.89,271.20 L111.00,270.69 L111.10,271.57 L111.20,269.72 L111.30,273.76 L111.40,276.78 L111.50,270.01 L111.60,274.55 L111.70,276.05 L111.80,276.13 L111.90,278.74 L112.00,275.97 L112.10,281.83 L112.20,281.81 L112.30,282.15 L112.40,281.94 L112.50,284.46 L112.60,283.54 L112.70,284.44 L112.80,284.01 L112.90,282.26 L113.00,285.87 L113.10,287.08 L113.20,289.09 L113.30,287.41 L113.40,290.80 L113.50,291.08 L113.60,291.12 L113.70,291.14 L113.80,291.16 L113.90,289.32 L114.00,288.30 L114.10,286.45 L114.20,284.81 L114.30,283.98 L114.40,285.05 L114.50,284.61 L114.60,284.45 L114.70,284.27 L114.80,283.64 L114.90,281.06 L115.00,278.26 L115.10,279.05 L115.20,277.26 L115.30,278.94 L115.40,278.65 L115.50,278.02 L115.60,275.76 L115.70,275.63 L115.80,276.42 L115.90,273.55 L116.00,274.59 L116.10,273.17 L116.20,273.05 L116.30,272.61 L116.40,273.05 L116.50,274.00 L116.60,269.26 L116.70,270.69 L116.80,271.92 L116.90,271.61 L117.00,271.87 L117.10,273.70 L117.20,276.07 L117.30,274.35 L117.40,274.47 L117.50,270.74 L117.60,275.42 L117.70,272.77 L117.80,273.31 L117.90,271.60 L118.00,272.52 L118.10,270.60 L118.20,271.80 L118.30,271.73 L118.40,271.82 L118.50,271.67 L118.60,269.83 L118.70,274.40 L118.80,271.84 L118.90,270.14 L119.00,272.07 L119.10,271.30 L119.20,271.75 L119.30,272.95 L119.40,274.53 L119.50,272.23 L119.60,270.43 L119.71,273.99 L119.81,272.23 L119.92,269.63 L120.03,269.62 L120.13,272.03 L120.23,269.25 L120.34,269.64 L120.44,269.96 L120.55,269.40 L120.66,269.60 L120.76,267.03 L120.87,265.43 L120.97,264.46 L121.07,266.31 L121.18,266.39 L121.28,262.49 L121.39,262.30 L121.50,260.53 L121.60,258.08 L121.70,258.10 L121.80,258.77 L121.90,254.77 L122.00,254.36 L122.10,255.01 L122.20,256.72 L122.30,256.07 L122.40,258.51 L122.50,259.03 L122.60,257.68 L122.70,257.86 L122.80,258.84 L122.90,262.31 L123.00,261.43 L123.10,260.89 L123.20,260.65 L123.30,263.73 L123.41,262.22 L123.51,259.02 L123.62,266.45 L123.72,265.45 L123.83,264.09 L123.93,267.10 L124.03,269.12 L124.14,271.01 L124.25,267.68 L124.35,272.89 L124.46,270.66 L124.56,276.12 L124.67,272.76 L124.77,274.76 L124.88,274.22 L124.98,273.76 L125.09,278.09 L125.19,278.33 L125.30,280.54 L125.40,280.39 L125.50,281.63 L125.60,277.44 L125.70,276.73 L125.80,279.69 L125.90,280.32 L126.00,280.03 L126.10,278.47 L126.20,281.92 L126.30,282.53 L126.40,282.57 L126.50,281.62 L126.60,283.75 L126.70,285.54 L126.80,283.59 L126.90,281.24 L127.00,285.84 L127.10,286.63 L127.20,287.08 L127.30,287.89 L127.40,285.96 L127.50,287.22 L127.60,286.51 L127.70,288.00 L127.80,290.46 L127.90,288.82 L128.00,288.99 L128.11,287.98 L128.21,288.99 L128.32,288.94 L128.42,290.89 L128.52,289.16 L128.63,286.01 L128.73,288.20 L128.84,285.26 L128.94,289.15 L129.04,285.73 L129.15,286.18 L129.25,285.25 L129.36,285.24 L129.46,286.58 L129.56,285.96 L129.67,284.77 L129.77,283.11 L129.88,279.29 L129.98,279.76 L130.08,279.65 L130.19,279.08 L130.29,279.92 L130.40,278.03 L130.50,278.04 L130.60,280.91 L130.70,275.78 L130.80,276.29 L130.90,275.89 L131.00,277.15 L131.10,276.05 L131.20,272.43 L131.30,269.80 L131.40,273.11 L131.50,270.90 L131.60,272.54 L131.70,272.31 L131.80,274.45 L131.90,272.89 L132.00,270.57 L132.10,271.67 L132.20,272.30 L132.30,268.03 L132.40,268.06 L132.50,268.56 L132.60,268.44 L132.70,266.12 L132.80,261.56 L132.90,261.86 L133.00,263.78 L133.10,264.30 L133.20,266.18 L133.30,261.13 L133.40,264.81 L133.50,262.53 L133.60,265.68 L133.70,263.78 L133.80,265.32 L133.90,261.62 L134.00,265.03 L134.10,265.95 L134.20,263.34 L134.30,263.85 L134.40,267.58 L134.50,264.08 L134.60,263.75 L134.70,263.33 L134.80,265.36 L134.90,266.39 L135.00,266.42 L135.10,268.89 L135.20,266.50 L135.30,267.73 L135.40,270.10 L135.50,265.88 L135.60,269.55 L135.70,270.68 L135.80,265.66 L135.90,267.35 L136.00,269.52 L136.10,268.27 L136.20,267.87 L136.30,267.09 L136.40,271.61 L136.50,271.39 L136.60,269.20 L136.70,267.84 L136.80,268.38 L136.90,275.18 L137.00,269.88 L137.10,271.90 L137.20,272.93 L137.30,273.28 L137.40,273.46 L137.50,272.40 L137.60,273.12 L137.70,277.87 L137.80,274.07 L137.90,277.09 L138.00,272.69 L138.10,275.10 L138.20,277.62 L138.30,279.40 L138.40,275.98 L138.50,279.28 L138.60,278.96 L138.70,276.85 L138.80,278.80 L138.90,277.75 L139.00,278.21 L139.11,278.01 L139.21,278.29 L139.31,277.90 L139.42,278.58 L139.52,278.32 L139.62,278.62 L139.72,275.71 L139.83,278.36 L139.93,279.15 L140.03,281.23 L140.14,277.33 L140.24,279.97 L140.34,281.26 L140.45,282.18 L140.55,284.10 L140.65,282.85 L140.76,285.53 L140.86,282.69 L140.96,282.61 L141.07,288.30 L141.17,287.15 L141.27,287.07 L141.38,286.05 L141.48,287.71 L141.58,285.14 L141.68,288.18 L141.79,285.81 L141.89,288.24 L141.99,286.55 L142.10,283.70 L142.20,284.77 L142.30,285.34 L142.40,285.32 L142.50,283.28 L142.60,285.91 L142.70,283.06 L142.80,280.32 L142.90,277.24 L143.00,279.18 L143.10,278.61 L143.20,276.69 L143.30,276.80 L143.40,275.28 L143.50,279.60 L143.60,278.34 L143.70,281.45 L143.80,276.68 L143.90,275.48 L144.01,275.50 L144.11,278.96 L144.22,276.70 L144.32,276.75 L144.43,275.88 L144.54,280.83 L144.64,282.51 L144.75,280.52 L144.86,280.40 L144.96,281.39 L145.07,285.47 L145.18,284.14 L145.28,281.32 L145.39,280.12 L145.49,282.80 L145.60,286.78 L145.70,283.71 L145.80,284.20 L145.90,281.85 L146.00,284.01 L146.10,283.55 L146.20,280.83 L146.30,281.60 L146.40,283.68 L146.50,284.05 L146.60,281.69 L146.70,280.19 L146.80,278.21 L146.90,278.82 L147.00,279.02 L147.10,279.31 L147.20,279.18 L147.30,282.04 L147.40,278.61 L147.50,277.45 L147.60,281.45 L147.70,280.80 L147.80,278.20 L147.90,276.31 L148.00,274.16 L148.10,275.87 L148.20,276.68 L148.30,273.56 L148.40,277.03 L148.50,276.47 L148.60,275.66 L148.70,274.89 L148.80,275.45 L148.90,279.74 L149.00,278.87 L149.10,276.57 L149.20,277.81 L149.30,273.71 L149.40,273.10 L149.50,275.23 L149.60,275.03 L149.70,275.29 L149.80,276.89 L149.90,281.47 L150.00,275.83 L150.10,276.36 L150.20,276.05 L150.30,275.07 L150.40,276.20 L150.50,277.25 L150.60,274.32 L150.70,276.61 L150.80,276.24 L150.90,276.46 L151.00,273.00 L151.10,272.28 L151.20,271.36 L151.30,274.80 L151.40,275.07 L151.50,274.36 L151.60,271.15 L151.70,272.54 L151.80,271.77 L151.90,270.75 L152.00,271.42 L152.10,274.01 L152.20,273.75 L152.30,272.80 L152.40,272.27 L152.51,271.13 L152.61,271.47 L152.72,269.37 L152.83,267.61 L152.93,263.38 L153.04,262.48 L153.15,262.84 L153.25,261.54 L153.36,259.32 L153.47,259.32 L153.57,258.28 L153.68,259.08 L153.79,259.06 L153.89,255.92 L154.00,253.64 L154.10,254.52 L154.20,256.36 L154.30,255.56 L154.40,256.72 L154.50,252.45 L154.60,258.83 L154.70,258.56 L154.80,254.13 L154.90,255.02 L155.00,254.82 L155.10,253.47 L155.20,253.42 L155.30,254.29 L155.40,253.82 L155.50,256.01 L155.60,255.65 L155.70,255.45 L155.80,252.82 L155.90,255.30 L156.01,253.17 L156.11,255.96 L156.22,256.12 L156.32,256.10 L156.43,255.76 L156.53,257.98 L156.64,257.78 L156.74,258.92 L156.85,257.44 L156.95,261.20 L157.05,258.41 L157.16,260.99 L157.26,261.31 L157.37,263.40 L157.47,261.59 L157.58,263.21 L157.68,261.52 L157.79,263.85 L157.89,266.18 L158.00,262.68 L158.10,263.76 L158.21,263.97 L158.31,265.37 L158.42,264.20 L158.53,263.16 L158.63,264.44 L158.74,264.82 L158.85,266.02 L158.95,268.07 L159.06,267.58 L159.17,267.27 L159.27,267.49 L159.38,267.98 L159.49,270.30 L159.59,269.15 L159.70,270.03 L159.80,269.03 L159.90,269.75 L160.00,272.29 L160.10,270.01 L160.20,269.44 L160.30,269.77 L160.40,270.31 L160.50,268.69 L160.60,271.86 L160.70,271.42 L160.80,271.18 L160.90,273.88 L161.00,270.30 L161.10,272.95 L161.20,270.28 L161.30,272.70 L161.40,268.57 L161.50,272.12 L161.60,270.73 L161.70,269.77 L161.80,270.23 L161.90,271.42 L162.00,271.03 L162.10,268.63 L162.20,271.84 L162.30,270.82 L162.40,270.55 L162.50,270.32 L162.60,272.27 L162.70,273.20 L162.80,270.68 L162.90,271.36 L163.00,274.39 L163.10,273.46 L163.20,273.57 L163.30,274.64 L163.40,271.03 L163.50,272.16 L163.60,274.63 L163.70,271.05 L163.80,272.34 L163.90,272.19 L164.00,273.03 L164.10,272.46 L164.20,275.88 L164.30,272.59 L164.40,272.78 L164.50,273.68 L164.60,275.11 L164.70,274.41 L164.80,274.74 L164.90,270.28 L165.00,272.29 L165.10,272.22 L165.20,271.40 L165.30,270.86 L165.40,269.06 L165.50,270.47 L165.61,265.67 L165.71,264.93 L165.82,268.81 L165.92,265.53 L166.03,267.39 L166.13,264.64 L166.24,266.82 L166.34,264.88 L166.45,266.05 L166.55,263.21 L166.66,265.82 L166.76,263.26 L166.87,263.54 L166.97,263.09 L167.08,263.08 L167.18,261.27 L167.29,258.58 L167.39,262.20 L167.50,260.62 L167.60,260.22 L167.70,260.87 L167.80,262.26 L167.90,258.19 L168.00,261.54 L168.10,260.02 L168.20,257.88 L168.30,262.57 L168.40,261.43 L168.50,260.76 L168.60,259.95 L168.70,260.82 L168.80,264.49 L168.90,261.61 L169.00,256.86 L169.10,260.49 L169.20,260.33 L169.30,262.49 L169.40,262.92 L169.50,262.98 L169.60,264.06 L169.70,267.02 L169.80,263.52 L169.90,269.43 L170.01,264.69 L170.11,264.23 L170.22,264.26 L170.33,265.27 L170.43,260.53 L170.54,259.67 L170.65,258.27 L170.75,258.63 L170.86,255.12 L170.97,257.38 L171.07,249.55 L171.18,254.22 L171.29,251.60 L171.39,252.33 L171.50,250.63 L171.60,246.11 L171.70,248.41 L171.80,246.86 L171.90,247.48 L172.00,248.90 L172.10,248.15 L172.20,247.06 L172.30,247.08 L172.40,247.96 L172.50,246.74 L172.60,247.76 L172.70,248.76 L172.80,250.02 L172.90,250.13 L173.00,247.51 L173.10,248.02 L173.20,247.72 L173.30,248.90 L173.40,251.20 L173.50,248.92 L173.60,243.78 L173.70,245.18 L173.80,245.02 L173.90,248.58 L174.00,245.77 L174.10,245.80 L174.20,247.45 L174.30,243.24 L174.40,243.44 L174.50,247.88 L174.60,245.44 L174.70,243.46 L174.80,241.86 L174.90,242.81 L175.01,244.47 L175.11,246.43 L175.22,246.81 L175.32,250.06 L175.43,251.36 L175.54,253.23 L175.64,256.00 L175.75,258.61 L175.86,256.44 L175.96,259.64 L176.07,260.71 L176.18,263.30 L176.28,263.47 L176.39,265.66 L176.49,266.57 L176.60,267.52 L176.70,269.49 L176.80,266.12 L176.90,265.59 L177.00,266.09 L177.10,263.26 L177.20,261.80 L177.30,260.56 L177.40,258.53 L177.50,255.98 L177.60,256.01 L177.70,253.91 L177.80,256.21 L177.90,249.57 L178.00,252.38 L178.10,248.78 L178.20,249.50 L178.30,247.76 L178.40,247.29 L178.50,246.53 L178.60,246.60 L178.70,241.54 L178.80,242.69 L178.90,238.08 L179.01,240.25 L179.11,236.95 L179.22,235.42 L179.32,235.89 L179.43,232.81 L179.53,231.80 L179.64,230.82 L179.74,233.32 L179.85,232.37 L179.95,228.47 L180.05,225.61 L180.16,227.91 L180.26,225.70 L180.37,225.65 L180.47,223.83 L180.58,221.49 L180.68,222.37 L180.79,221.78 L180.89,219.67 L181.00,217.11 L181.10,215.18 L181.20,216.34 L181.30,215.31 L181.40,217.12 L181.50,214.42 L181.60,216.81 L181.70,218.47 L181.80,219.84 L181.90,218.39 L182.00,222.05 L182.10,218.62 L182.20,219.89 L182.30,217.98 L182.40,220.69 L182.50,220.53 L182.60,224.87 L182.70,224.12 L182.80,223.07 L182.90,226.69 L183.00,227.47 L183.10,228.25 L183.20,229.16 L183.30,228.95 L183.40,227.54 L183.51,227.19 L183.61,223.46 L183.71,227.39 L183.82,227.54 L183.92,225.33 L184.02,225.76 L184.12,225.41 L184.23,224.68 L184.33,224.63 L184.43,225.15 L184.54,221.89 L184.64,222.13 L184.74,220.86 L184.85,222.32 L184.95,218.79 L185.05,219.53 L185.15,218.91 L185.26,217.59 L185.36,219.35 L185.46,216.68 L185.57,218.07 L185.67,216.25 L185.77,217.59 L185.88,215.34 L185.98,216.96 L186.08,215.58 L186.18,213.98 L186.29,213.72 L186.39,212.26 L186.49,212.26 L186.60,214.40 L186.70,210.36 L186.80,211.86 L186.90,210.30 L187.00,204.75 L187.10,207.96 L187.20,208.45 L187.30,207.15 L187.40,204.29 L187.50,205.66 L187.60,206.69 L187.70,205.49 L187.80,203.53 L187.90,203.69 L188.01,203.26 L188.11,200.50 L188.22,201.75 L188.32,200.52 L188.43,199.75 L188.53,199.83 L188.64,194.56 L188.74,196.95 L188.85,193.34 L188.95,194.76 L189.05,195.72 L189.16,190.43 L189.26,191.02 L189.37,189.74 L189.47,191.53 L189.58,187.68 L189.68,185.69 L189.79,187.87 L189.89,185.43 L190.00,183.14 L190.10,184.86 L190.20,181.04 L190.30,185.13 L190.40,183.55 L190.50,182.98 L190.60,181.78 L190.70,181.59 L190.80,186.23 L190.90,185.20 L191.00,183.76 L191.10,185.32 L191.20,183.09 L191.30,185.39 L191.40,183.14 L191.50,183.71 L191.60,184.63 L191.70,183.78 L191.80,184.37 L191.90,182.43 L192.00,186.55 L192.10,185.99 L192.20,183.71 L192.30,183.97 L192.41,184.74 L192.51,185.74 L192.62,189.97 L192.73,189.34 L192.83,193.72 L192.94,195.78 L193.04,195.77 L193.15,199.39 L193.26,202.33 L193.36,201.71 L193.47,203.98 L193.57,205.03 L193.68,206.67 L193.79,208.38 L193.89,209.96 L194.00,212.84 L194.11,208.66 L194.21,205.03 L194.32,206.37 L194.43,204.47 L194.53,200.65 L194.64,194.34 L194.74,196.18 L194.85,192.92 L194.96,191.00 L195.06,188.21 L195.17,184.75 L195.27,183.55 L195.38,185.10 L195.49,183.24 L195.59,177.58 L195.70,175.57 L195.80,183.77 L195.90,186.29 L196.00,192.62 L196.10,197.43 L196.20,199.62 L196.30,204.74 L196.40,208.78 L196.50,216.97 L196.60,221.68 L196.70,226.73 L196.80,232.42 L196.90,229.19 L197.01,232.14 L197.11,231.37 L197.22,233.83 L197.32,235.99 L197.43,235.74 L197.53,235.90 L197.64,236.42 L197.74,232.19 L197.85,238.25 L197.95,238.92 L198.05,238.50 L198.16,238.90 L198.26,238.47 L198.37,240.38 L198.47,243.27 L198.58,242.29 L198.68,246.26 L198.79,241.10 L198.89,244.69 L199.00,246.66 L199.10,247.38 L199.20,247.63 L199.30,246.34 L199.40,248.40 L199.50,249.17 L199.60,249.53 L199.70,248.72 L199.80,250.75 L199.90,250.34 L200.00,249.80 L200.10,252.49 L200.20,252.26 L200.30,254.91 L200.40,252.59 L200.50,256.04 L200.60,256.34 L200.70,252.00 L200.80,254.09 L200.90,254.92 L201.00,258.69 L201.10,254.47 L201.20,259.73 L201.30,260.91 L201.40,259.97 L201.50,262.55 L201.60,261.01 L201.70,262.49 L201.80,263.57 L201.90,265.00 L202.00,265.94 L202.10,265.61 L202.20,266.83 L202.30,267.80 L202.40,269.29 L202.50,269.27 L202.60,265.76 L202.70,266.71 L202.80,265.65 L202.90,263.52 L203.00,262.03 L203.10,262.90 L203.20,263.47 L203.30,263.60 L203.40,262.49 L203.50,261.50 L203.60,260.86 L203.70,262.21 L203.80,260.64 L203.90,260.57 L204.00,261.23 L204.10,259.81 L204.20,260.75 L204.30,259.75 L204.40,260.72 L204.50,260.90 L204.60,259.12 L204.70,259.24 L204.80,256.69 L204.90,259.76 L205.00,258.30 L205.10,260.78 L205.20,256.15 L205.30,258.53 L205.40,260.45 L205.50,255.99 L205.60,258.54 L205.70,258.91 L205.80,258.75 L205.90,258.32 L206.01,257.54 L206.11,260.87 L206.22,258.75 L206.32,258.86 L206.43,259.09 L206.53,261.05 L206.64,259.07 L206.74,259.91 L206.85,264.71 L206.95,264.76 L207.05,265.03 L207.16,265.52 L207.26,264.66 L207.37,262.27 L207.47,266.63 L207.58,267.30 L207.68,266.91 L207.79,263.64 L207.89,267.33 L208.00,267.97 L208.10,265.79 L208.21,263.51 L208.31,262.65 L208.42,257.58 L208.53,258.53 L208.63,257.97 L208.74,251.71 L208.85,252.99 L208.95,250.84 L209.06,248.79 L209.17,245.15 L209.27,243.51 L209.38,240.29 L209.49,240.00 L209.59,241.06 L209.70,241.41 L209.81,236.84 L209.91,236.68 L210.02,235.11 L210.12,238.82 L210.23,235.98 L210.34,231.50 L210.44,234.25 L210.55,233.32 L210.66,234.24 L210.76,237.04 L210.87,234.93 L210.97,234.15 L211.08,233.39 L211.19,234.62 L211.29,233.68 L211.40,234.20 L211.50,236.25 L211.60,235.11 L211.70,234.83 L211.80,236.72 L211.90,235.59 L212.00,233.58 L212.10,236.25 L212.20,235.15 L212.30,235.46 L212.40,234.89 L212.50,233.89 L212.60,234.48 L212.70,235.10 L212.80,233.66 L212.90,230.43 L213.00,236.24 L213.10,232.96 L213.20,232.93 L213.30,234.71 L213.40,231.55 L213.50,237.36 L213.60,233.23 L213.70,234.86 L213.80,233.28 L213.90,234.81 L214.00,232.16 L214.10,230.21 L214.20,229.70 L214.30,227.19 L214.40,226.04 L214.50,228.02 L214.60,226.91 L214.70,226.07 L214.80,225.51 L214.90,225.18 L215.00,226.92 L215.10,227.18 L215.20,224.45 L215.30,227.38 L215.40,221.02 L215.50,222.74 L215.60,219.64 L215.70,219.94 L215.80,219.14 L215.90,220.73 L216.00,222.01 L216.10,219.00 L216.20,217.89 L216.30,218.31 L216.40,216.84 L216.50,213.78 L216.61,216.45 L216.71,215.66 L216.82,216.46 L216.93,218.01 L217.03,214.91 L217.14,221.48 L217.24,218.46 L217.35,217.88 L217.46,216.46 L217.56,220.79 L217.67,221.13 L217.77,220.49 L217.88,221.52 L217.99,221.74 L218.09,222.93 L218.20,224.76 L218.30,224.98 L218.40,229.05 L218.50,227.12 L218.60,226.98 L218.70,231.26 L218.80,231.03 L218.90,233.07 L219.00,233.65 L219.10,232.94 L219.20,233.10 L219.30,235.25 L219.40,238.89 L219.50,236.41 L219.60,240.53 L219.70,238.99 L219.80,237.05 L219.90,240.16 L220.00,242.10 L220.10,241.08 L220.20,239.38 L220.30,243.79 L220.40,242.68 L220.50,245.31 L220.60,242.98 L220.70,246.35 L220.80,245.79 L220.90,244.99 L221.00,248.17 L221.10,249.88 L221.20,249.20 L221.30,248.60 L221.40,252.06 L221.50,250.45 L221.60,252.88 L221.70,252.21 L221.80,253.92 L221.90,252.23 L222.00,253.33 L222.10,253.03 L222.20,249.75 L222.30,248.29 L222.40,249.99 L222.50,251.01 L222.60,249.43 L222.70,249.56 L222.80,246.01 L222.90,248.43 L223.00,245.51 L223.10,246.35 L223.20,247.17 L223.30,244.67 L223.40,245.38 L223.50,243.17 L223.60,244.28 L223.70,242.67 L223.80,244.38 L223.90,246.38 L224.00,242.84 L224.10,244.41 L224.20,241.26 L224.30,241.84 L224.40,240.49 L224.50,241.05 L224.60,241.65 L224.70,240.06 L224.80,238.14 L224.90,239.03 L225.00,238.15 L225.10,238.40 L225.20,238.61 L225.30,238.71 L225.40,233.01 L225.50,232.82 L225.60,235.68 L225.70,232.69 L225.80,235.97 L225.90,232.42 L226.00,231.63 L226.10,233.93 L226.20,231.87 L226.30,233.41 L226.40,230.67 L226.50,228.77 L226.60,229.35 L226.70,227.71 L226.81,228.33 L226.91,230.24 L227.01,229.32 L227.12,228.56 L227.22,231.18 L227.33,231.03 L227.43,228.59 L227.53,232.92 L227.64,230.05 L227.74,230.93 L227.84,233.35 L227.95,233.01 L228.05,233.29 L228.16,237.52 L228.26,236.28 L228.36,235.88 L228.47,238.03 L228.57,237.98 L228.67,234.88 L228.78,236.20 L228.88,236.75 L228.99,242.45 L229.09,239.47 L229.19,241.65 L229.30,240.85 L229.40,244.32 L229.50,241.26 L229.60,243.42 L229.70,243.32 L229.80,244.67 L229.90,246.40 L230.00,244.85 L230.10,243.94 L230.20,242.02 L230.30,240.99 L230.40,242.57 L230.50,240.05 L230.60,241.37 L230.70,239.73 L230.80,241.45 L230.90,241.69 L231.00,243.56 L231.10,241.91 L231.20,242.34 L231.30,242.71 L231.40,242.73 L231.50,244.73 L231.60,241.43 L231.70,241.55 L231.80,242.94 L231.90,243.34 L232.00,243.83 L232.10,244.80 L232.20,241.13 L232.30,246.69 L232.40,245.81 L232.50,243.15 L232.60,241.07 L232.70,242.12 L232.80,242.34 L232.90,238.84 L233.00,242.36 L233.10,240.42 L233.20,243.68 L233.30,244.26 L233.40,243.56 L233.50,239.92 L233.60,244.49 L233.70,243.72 L233.80,242.01 L233.90,243.16 L234.00,245.67 L234.10,241.56 L234.20,241.83 L234.30,242.30 L234.40,244.74 L234.50,238.73 L234.60,243.79 L234.70,239.34 L234.80,241.51 L234.90,237.78 L235.00,239.59 L235.10,240.17 L235.20,242.44 L235.30,239.32 L235.40,242.47 L235.50,240.01 L235.60,242.49 L235.70,240.27 L235.80,241.09 L235.90,239.58 L236.00,242.03 L236.10,237.88 L236.20,240.43 L236.30,243.19 L236.40,241.74 L236.50,242.37 L236.60,243.04 L236.70,243.92 L236.80,241.34 L236.90,242.76 L237.00,245.47 L237.10,239.53 L237.20,239.61 L237.30,241.39 L237.40,244.59 L237.50,244.82 L237.60,244.15 L237.70,245.69 L237.80,244.91 L237.90,246.04 L238.00,244.65 L238.10,244.94 L238.20,245.02 L238.30,247.82 L238.40,250.44 L238.50,244.17 L238.60,248.73 L238.70,248.46 L238.80,250.63 L238.90,251.27 L239.00,251.59 L239.10,251.53 L239.20,248.95 L239.30,247.93 L239.40,253.07 L239.50,253.25 L239.60,249.90 L239.70,254.54 L239.80,253.76 L239.90,249.39 L240.00,255.12 L240.10,253.13 L240.20,256.52 L240.30,253.71 L240.40,253.53 L240.50,251.93 L240.60,254.99 L240.70,253.55 L240.81,256.26 L240.91,252.45 L241.02,253.11 L241.12,254.82 L241.23,253.48 L241.33,252.50 L241.44,252.48 L241.54,253.71 L241.65,251.19 L241.75,252.59 L241.85,248.70 L241.96,247.60 L242.06,252.48 L242.17,248.73 L242.27,246.97 L242.38,249.85 L242.48,250.11 L242.59,246.83 L242.69,248.28 L242.80,249.36 L242.90,247.17 L243.00,249.01 L243.10,247.04 L243.20,247.40 L243.30,248.26 L243.40,241.26 L243.50,243.39 L243.60,239.63 L243.70,238.43 L243.80,238.79 L243.90,239.38 L244.00,239.06 L244.10,235.88 L244.20,234.58 L244.30,235.23 L244.40,235.33 L244.50,232.86 L244.60,230.50 L244.70,234.70 L244.80,230.20 L244.90,230.38 L245.00,228.24 L245.10,227.45 L245.20,231.08 L245.31,228.16 L245.41,229.06 L245.52,230.90 L245.62,229.72 L245.73,229.52 L245.83,232.43 L245.94,234.93 L246.04,231.49 L246.15,233.70 L246.25,232.97 L246.35,231.26 L246.46,234.52 L246.56,235.65 L246.67,236.90 L246.77,236.89 L246.88,232.83 L246.98,234.94 L247.09,233.85 L247.19,232.88 L247.30,233.53 L247.40,236.11 L247.50,236.36 L247.60,234.86 L247.70,235.28 L247.80,233.73 L247.90,234.27 L248.00,233.49 L248.10,229.78 L248.20,230.13 L248.30,234.22 L248.40,230.85 L248.50,230.35 L248.60,228.52 L248.70,225.58 L248.80,223.95 L248.90,224.05 L249.00,226.81 L249.10,224.83 L249.20,225.53 L249.30,223.03 L249.40,224.72 L249.50,221.14 L249.60,217.48 L249.70,221.13 L249.80,218.90 L249.90,219.62 L250.00,217.86 L250.10,215.76 L250.20,214.45 L250.30,212.16 L250.40,210.93 L250.50,210.73 L250.60,210.46 L250.70,208.94 L250.80,209.75 L250.90,212.59 L251.00,212.25 L251.10,214.36 L251.20,211.35 L251.30,213.47 L251.40,216.95 L251.50,214.60 L251.60,218.50 L251.70,214.20 L251.80,215.21 L251.90,212.69 L252.00,216.54 L252.10,216.12 L252.20,218.37 L252.30,215.71 L252.40,215.72 L252.50,213.91 L252.60,216.44 L252.70,218.60 L252.80,219.51 L252.90,219.89 L253.00,219.58 L253.10,218.83 L253.20,219.13 L253.31,219.33 L253.41,217.30 L253.51,220.94 L253.62,217.47 L253.72,219.73 L253.83,220.05 L253.93,220.55 L254.03,222.70 L254.14,221.53 L254.24,220.08 L254.34,221.61 L254.45,219.00 L254.55,220.37 L254.66,219.87 L254.76,221.42 L254.86,219.08 L254.97,221.74 L255.07,220.52 L255.17,217.52 L255.28,217.71 L255.38,218.29 L255.49,222.00 L255.59,222.33 L255.69,222.81 L255.80,221.62 L255.90,220.28 L256.00,221.18 L256.10,223.47 L256.20,219.97 L256.30,220.40 L256.40,218.58 L256.50,218.18 L256.60,220.10 L256.70,215.64 L256.80,216.50 L256.90,215.61 L257.00,212.02 L257.10,213.04 L257.20,210.14 L257.30,210.27 L257.40,209.19 L257.50,207.43 L257.60,206.05 L257.70,209.23 L257.80,205.55 L257.90,205.65 L258.00,207.23 L258.10,205.96 L258.20,205.67 L258.30,205.38 L258.40,204.34 L258.50,206.34 L258.60,201.00 L258.70,205.94 L258.80,202.61 L258.90,198.16 L259.00,198.44 L259.10,195.87 L259.20,197.47 L259.31,195.97 L259.42,198.81 L259.53,201.69 L259.64,202.76 L259.75,203.82 L259.85,205.62 L259.96,208.30 L260.07,211.67 L260.18,211.29 L260.29,212.80 L260.40,216.03 L260.50,218.05 L260.60,210.91 L260.70,213.56 L260.80,211.92 L260.90,212.32 L261.00,210.11 L261.10,211.44 L261.20,210.82 L261.30,208.53 L261.40,208.22 L261.50,205.25 L261.60,207.21 L261.70,203.56 L261.80,206.69 L261.90,199.24 L262.00,202.08 L262.10,199.65 L262.20,200.22 L262.30,200.53 L262.40,199.97 L262.50,197.69 L262.60,198.48 L262.70,193.05 L262.80,192.43 L262.90,196.35 L263.00,193.43 L263.10,189.25 L263.20,192.18 L263.30,188.86 L263.40,191.24 L263.50,189.08 L263.60,186.51 L263.70,189.34 L263.80,184.93 L263.90,186.01 L264.00,185.53 L264.10,185.88 L264.20,186.05 L264.30,186.45 L264.40,184.67 L264.50,184.08 L264.60,182.20 L264.70,183.97 L264.80,183.96 L264.90,182.18 L265.00,183.51 L265.10,180.92 L265.20,180.55 L265.30,184.61 L265.40,182.71 L265.50,182.94 L265.60,181.30 L265.70,181.36 L265.80,179.46 L265.90,179.00 L266.00,179.94 L266.10,178.39 L266.20,180.15 L266.30,177.20 L266.40,177.83 L266.50,177.66 L266.60,179.27 L266.70,177.85 L266.80,180.44 L266.90,176.97 L267.00,179.24 L267.10,178.44 L267.21,181.55 L267.31,177.65 L267.42,179.04 L267.53,177.75 L267.63,171.67 L267.74,173.12 L267.84,171.55 L267.95,170.27 L268.06,167.14 L268.16,167.54 L268.27,164.70 L268.38,163.99 L268.48,162.41 L268.59,163.15 L268.69,158.93 L268.80,159.63 L268.90,156.07 L269.01,159.96 L269.11,154.43 L269.21,157.83 L269.32,156.14 L269.42,158.56 L269.52,155.54 L269.62,155.46 L269.73,156.21 L269.83,155.59 L269.93,153.29 L270.04,153.87 L270.14,153.21 L270.24,154.00 L270.35,151.23 L270.45,151.80 L270.55,150.12 L270.65,149.44 L270.76,151.09 L270.86,151.24 L270.96,152.14 L271.07,149.33 L271.17,150.23 L271.27,151.76 L271.38,149.80 L271.48,149.97 L271.58,149.40 L271.68,148.44 L271.79,148.45 L271.89,151.06 L271.99,149.79 L272.10,149.36 L272.20,147.34 L272.30,150.39 L272.40,153.59 L272.50,156.28 L272.60,155.91 L272.70,157.38 L272.80,160.34 L272.90,163.25 L273.00,163.42 L273.10,166.52 L273.20,168.32 L273.30,171.73 L273.40,169.66 L273.50,166.33 L273.60,164.94 L273.70,166.63 L273.80,163.68 L273.90,164.52 L274.00,165.65 L274.10,165.89 L274.20,165.79 L274.30,164.96 L274.40,160.40 L274.50,160.10 L274.60,156.62 L274.70,157.45 L274.80,157.75 L274.90,156.11 L275.00,156.63 L275.10,156.88 L275.20,154.22 L275.30,155.74 L275.40,153.11 L275.50,157.44 L275.60,153.11 L275.70,152.33 L275.80,156.01 L275.90,154.07 L276.00,155.84 L276.10,154.25 L276.21,154.34 L276.31,153.55 L276.42,155.69 L276.53,151.07 L276.63,154.31 L276.74,152.97 L276.84,156.60 L276.95,154.35 L277.06,150.74 L277.16,150.91 L277.27,150.91 L277.38,148.72 L277.48,148.88 L277.59,148.96 L277.69,145.00 L277.80,146.56 L277.90,146.07 L278.01,145.95 L278.11,143.12 L278.22,141.66 L278.32,139.22 L278.43,140.13 L278.53,139.76 L278.64,138.23 L278.74,137.64 L278.85,135.36 L278.95,133.45 L279.06,130.60 L279.16,132.72 L279.27,132.26 L279.37,130.44 L279.48,130.91 L279.58,127.70 L279.69,125.77 L279.79,126.70 L279.90,123.76 L280.00,124.26 L280.11,126.16 L280.21,124.95 L280.32,129.91 L280.43,126.81 L280.53,128.88 L280.64,131.81 L280.74,135.80 L280.85,134.48 L280.96,135.08 L281.06,134.91 L281.17,137.28 L281.27,137.20 L281.38,140.04 L281.49,143.48 L281.59,143.86 L281.70,144.73 L281.81,144.86 L281.91,145.93 L282.02,143.74 L282.12,143.66 L282.23,146.04 L282.34,149.73 L282.44,147.14 L282.55,145.81 L282.66,145.73 L282.76,147.29 L282.87,148.61 L282.97,146.52 L283.08,147.62 L283.19,147.04 L283.29,146.39 L283.40,145.52 L283.50,149.04 L283.60,150.81 L283.70,153.62 L283.80,155.92 L283.90,160.82 L284.00,159.92 L284.10,164.70 L284.20,171.02 L284.30,172.06 L284.40,173.41 L284.50,177.02 L284.60,177.17 L284.70,179.05 L284.80,180.32 L284.90,183.45 L285.00,188.83 L285.10,192.04 L285.21,189.08 L285.31,188.84 L285.42,191.32 L285.53,186.99 L285.63,186.83 L285.74,186.30 L285.84,186.42 L285.95,184.23 L286.06,181.13 L286.16,181.23 L286.27,180.03 L286.38,178.87 L286.48,180.93 L286.59,179.78 L286.69,181.36 L286.80,180.13 L286.91,180.55 L287.01,180.85 L287.12,182.04 L287.23,185.45 L287.33,182.42 L287.44,185.51 L287.55,186.24 L287.65,184.02 L287.76,184.54 L287.87,189.07 L287.97,190.01 L288.08,189.48 L288.19,188.38 L288.29,191.99 L288.40,191.57 L288.50,191.34 L288.60,190.34 L288.70,188.84 L288.80,189.84 L288.90,190.85 L289.00,187.87 L289.10,186.35 L289.20,182.92 L289.30,183.60 L289.40,181.96 L289.50,182.62 L289.60,180.20 L289.70,178.51 L289.80,179.02 L289.90,175.42 L290.00,176.60 L290.10,176.70 L290.20,173.03 L290.30,173.40 L290.40,168.85 L290.50,171.32 L290.60,170.96 L290.70,167.94 L290.80,169.89 L290.90,164.78 L291.00,161.09 L291.10,159.96 L291.20,161.67 L291.30,157.80 L291.41,161.38 L291.51,155.63 L291.62,160.56 L291.73,159.99 L291.83,163.54 L291.94,163.44 L292.04,164.48 L292.15,165.29 L292.26,168.14 L292.36,169.34 L292.47,168.98 L292.57,171.43 L292.68,174.13 L292.79,172.64 L292.89,176.56 L293.00,174.88 L293.10,175.57 L293.21,175.94 L293.31,175.66 L293.42,174.05 L293.52,171.79 L293.63,169.59 L293.73,171.64 L293.84,171.91 L293.94,165.61 L294.05,167.23 L294.15,168.48 L294.26,167.80 L294.36,164.73 L294.47,165.62 L294.57,161.39 L294.68,161.27 L294.78,164.32 L294.89,160.19 L294.99,159.51 L295.10,156.61 L295.20,156.73 L295.30,156.60 L295.40,157.94 L295.50,156.56 L295.60,155.25 L295.70,152.20 L295.80,151.20 L295.90,148.74 L296.00,150.78 L296.10,148.14 L296.20,148.18 L296.30,145.01 L296.40,145.85 L296.50,150.52 L296.60,147.27 L296.70,145.71 L296.80,141.66 L296.90,143.67 L297.00,145.95 L297.10,138.72 L297.20,136.35 L297.30,138.81 L297.40,136.81 L297.50,136.54 L297.60,135.07 L297.70,134.14 L297.80,133.00 L297.90,136.23 L298.00,133.05 L298.10,132.87 L298.20,129.41 L298.30,130.59 L298.40,126.83 L298.50,126.84 L298.60,127.65 L298.70,124.95 L298.80,124.33 L298.90,121.79 L299.00,124.10 L299.10,123.35 L299.21,124.63 L299.31,126.71 L299.42,128.34 L299.53,127.06 L299.63,132.81 L299.74,136.14 L299.84,133.61 L299.95,134.31 L300.06,139.07 L300.16,143.98 L300.27,143.96 L300.38,148.38 L300.48,150.68 L300.59,153.40 L300.69,154.07 L300.80,156.24 L300.90,156.86 L301.00,154.94 L301.10,153.34 L301.20,155.56 L301.30,154.91 L301.40,151.86 L301.50,151.12 L301.60,152.14 L301.70,146.17 L301.80,146.34 L301.90,146.77 L302.00,145.46 L302.10,141.91 L302.20,140.46 L302.30,140.75 L302.40,136.87 L302.50,137.24 L302.60,136.74 L302.70,131.87 L302.80,133.80 L302.90,132.50 L303.00,132.18 L303.10,126.87 L303.20,130.29 L303.31,129.91 L303.41,133.89 L303.52,135.89 L303.62,135.77 L303.73,137.55 L303.83,141.63 L303.94,140.52 L304.04,147.91 L304.15,145.44 L304.25,148.69 L304.36,149.55 L304.46,154.51 L304.57,155.26 L304.67,157.00 L304.78,158.85 L304.88,159.44 L304.99,164.29 L305.09,165.38 L305.20,166.53 L305.30,168.06 L305.40,171.97 L305.51,166.08 L305.61,166.02 L305.71,163.95 L305.81,165.97 L305.92,165.13 L306.02,161.13 L306.12,163.66 L306.22,164.08 L306.33,163.28 L306.43,161.61 L306.53,161.10 L306.63,158.50 L306.74,160.29 L306.84,157.16 L306.94,157.57 L307.04,160.04 L307.15,155.97 L307.25,154.74 L307.35,155.39 L307.46,156.61 L307.56,152.37 L307.66,154.67 L307.76,151.64 L307.87,152.51 L307.97,151.36 L308.07,148.72 L308.17,151.72 L308.28,152.75 L308.38,150.40 L308.48,149.51 L308.58,145.47 L308.69,148.36 L308.79,146.58 L308.89,143.55 L308.99,146.37 L309.10,142.55 L309.20,143.67 L309.30,146.45 L309.40,150.35 L309.50,145.48 L309.60,145.78 L309.70,148.59 L309.80,148.87 L309.90,145.84 L310.00,146.24 L310.10,151.39 L310.20,147.57 L310.30,153.54 L310.40,150.16 L310.50,152.53 L310.60,152.93 L310.70,152.26 L310.80,154.39 L310.90,154.67 L311.00,158.40 L311.10,157.62 L311.20,159.29 L311.30,158.65 L311.40,159.11 L311.50,159.76 L311.60,161.35 L311.70,165.58 L311.80,164.66 L311.90,164.52 L312.00,168.07 L312.10,166.50 L312.20,165.30 L312.30,164.78 L312.40,163.64 L312.50,166.47 L312.60,166.11 L312.70,164.84 L312.80,165.59 L312.90,170.96 L313.00,169.25 L313.10,170.71 L313.20,170.38 L313.30,169.90 L313.40,171.41 L313.50,172.82 L313.60,170.46 L313.70,172.84 L313.80,174.60 L313.90,172.85 L314.00,174.00 L314.10,172.95 L314.20,175.15 L314.30,173.35 L314.40,173.09 L314.51,177.12 L314.61,172.41 L314.71,173.98 L314.82,173.19 L314.92,172.01 L315.02,170.09 L315.12,168.08 L315.23,169.47 L315.33,171.06 L315.43,169.99 L315.54,169.27 L315.64,168.69 L315.74,165.51 L315.85,163.78 L315.95,167.05 L316.05,164.92 L316.15,162.39 L316.26,167.48 L316.36,163.65 L316.46,162.37 L316.57,164.46 L316.67,160.91 L316.77,161.03 L316.88,162.66 L316.98,159.43 L317.08,163.80 L317.18,160.20 L317.29,162.56 L317.39,157.83 L317.49,156.86 L317.60,155.06 L317.70,155.57 L317.80,153.40 L317.90,158.41 L318.00,155.46 L318.10,156.17 L318.20,158.71 L318.30,157.13 L318.40,159.76 L318.50,161.65 L318.60,162.47 L318.70,162.31 L318.80,161.09 L318.90,165.29 L319.00,162.00 L319.10,163.69 L319.20,165.83 L319.30,164.58 L319.40,165.77 L319.50,164.59 L319.60,162.96 L319.70,162.91 L319.80,162.41 L319.90,161.40 L320.00,160.57 L320.10,159.30 L320.20,159.04 L320.30,161.44 L320.40,164.08 L320.50,160.29 L320.60,161.83 L320.70,161.59 L320.80,161.56 L320.90,160.28 L321.00,160.86 L321.10,158.94 L321.20,155.35 L321.30,157.61 L321.40,153.01 L321.50,156.10 L321.60,156.10 L321.70,156.75 L321.80,154.03 L321.90,154.68 L322.00,155.31 L322.10,152.19 L322.20,151.46 L322.30,151.84 L322.40,151.06 L322.50,150.45 L322.60,151.21 L322.70,147.73 L322.80,149.79 L322.90,150.10 L323.00,149.55 L323.10,147.60 L323.20,146.32 L323.30,146.40 L323.40,147.64 L323.50,146.75 L323.60,144.82 L323.70,146.30 L323.80,145.53 L323.90,144.73 L324.00,147.03 L324.10,145.65 L324.20,149.83 L324.30,146.62 L324.40,147.47 L324.50,149.48 L324.60,149.10 L324.70,150.65 L324.80,149.38 L324.90,146.85 L325.00,145.57 L325.10,148.12 L325.20,152.58 L325.30,151.05 L325.40,150.32 L325.50,150.38 L325.60,151.00 L325.70,152.27 L325.80,150.87 L325.90,152.53 L326.00,154.19 L326.10,157.79 L326.20,153.68 L326.31,155.45 L326.41,151.54 L326.51,153.22 L326.62,153.11 L326.72,148.89 L326.83,150.02 L326.93,147.96 L327.03,149.89 L327.14,145.89 L327.24,145.74 L327.34,145.82 L327.45,146.64 L327.55,141.86 L327.66,141.55 L327.76,140.53 L327.86,139.20 L327.97,137.67 L328.07,136.70 L328.17,137.02 L328.28,133.76 L328.38,135.24 L328.49,132.82 L328.59,132.88 L328.69,135.63 L328.80,128.98 L328.90,130.00 L329.00,126.72 L329.10,132.03 L329.20,127.41 L329.30,127.21 L329.40,128.15 L329.50,125.96 L329.60,131.30 L329.70,128.44 L329.80,128.43 L329.90,127.24 L330.00,130.46 L330.10,128.59 L330.20,126.53 L330.30,128.95 L330.40,124.52 L330.50,127.09 L330.60,127.76 L330.70,126.66 L330.80,124.28 L330.90,127.27 L331.00,126.94 L331.10,123.42 L331.20,125.15 L331.30,123.63 L331.40,124.51 L331.50,126.34 L331.60,124.17 L331.70,122.32 L331.80,122.65 L331.90,120.20 L332.00,123.51 L332.10,120.67 L332.20,123.91 L332.30,120.19 L332.40,119.49 L332.50,122.31 L332.60,120.16 L332.70,119.47 L332.80,119.20 L332.90,120.75 L333.00,121.16 L333.10,122.22 L333.20,124.81 L333.30,117.41 L333.40,123.31 L333.50,123.08 L333.60,122.90 L333.70,121.80 L333.80,122.82 L333.90,122.86 L334.00,122.43 L334.10,121.45 L334.20,124.17 L334.30,121.70 L334.40,123.62 L334.50,122.48 L334.60,122.44 L334.70,126.56 L334.80,126.89 L334.90,125.49 L335.00,128.48 L335.10,126.73 L335.20,131.92 L335.30,130.59 L335.40,133.09 L335.50,129.75 L335.60,130.78 L335.70,128.32 L335.80,129.70 L335.90,129.26 L336.00,130.41 L336.10,131.91 L336.20,130.49 L336.30,132.83 L336.40,133.63 L336.50,131.25 L336.60,131.33 L336.70,129.83 L336.80,133.75 L336.91,133.59 L337.02,128.85 L337.13,132.96 L337.24,130.42 L337.35,133.67 L337.45,133.28 L337.56,132.05 L337.67,133.40 L337.78,130.15 L337.89,130.21 L338.00,129.63 L338.10,128.45 L338.20,129.72 L338.30,130.00 L338.40,133.00 L338.50,134.27 L338.60,130.51 L338.70,130.36 L338.80,129.86 L338.90,129.79 L339.00,129.53 L339.10,132.86 L339.20,127.47 L339.30,128.55 L339.40,127.37 L339.50,128.18 L339.60,126.90 L339.70,128.80 L339.80,126.65 L339.90,131.00 L340.00,127.43 L340.10,123.64 L340.20,126.54 L340.30,124.35 L340.40,123.08 L340.50,124.33 L340.60,123.23 L340.70,124.86 L340.80,125.52 L340.90,125.07 L341.00,129.31 L341.10,126.38 L341.20,128.10 L341.30,127.46 L341.40,131.72 L341.50,131.50 L341.60,128.64 L341.70,130.22 L341.80,133.28 L341.90,133.64 L342.00,133.60 L342.10,133.71 L342.20,132.31 L342.31,133.69 L342.41,134.57 L342.51,136.99 L342.62,132.37 L342.72,136.68 L342.82,135.22 L342.93,134.00 L343.03,131.49 L343.13,130.26 L343.24,129.71 L343.34,132.42 L343.44,131.42 L343.55,132.00 L343.65,131.91 L343.75,128.71 L343.86,129.10 L343.96,131.66 L344.06,126.37 L344.17,125.92 L344.27,125.27 L344.37,125.09 L344.48,124.80 L344.58,123.65 L344.68,125.76 L344.79,121.03 L344.89,120.99 L344.99,119.16 L345.10,119.66 L345.20,121.77 L345.30,122.77 L345.40,123.57 L345.50,123.01 L345.60,125.39 L345.70,126.92 L345.80,128.49 L345.90,128.29 L346.00,131.68 L346.10,131.60 L346.20,132.04 L346.30,134.45 L346.40,136.03 L346.50,139.81 L346.60,142.27 L346.70,141.63 L346.80,141.40 L346.90,140.86 L347.00,140.42 L347.10,144.45 L347.20,148.76 L347.30,149.30 L347.40,146.45 L347.51,148.67 L347.61,149.58 L347.71,149.85 L347.81,147.89 L347.92,148.30 L348.02,147.44 L348.12,147.39 L348.23,149.77 L348.33,150.19 L348.43,151.52 L348.53,150.98 L348.64,150.26 L348.74,148.53 L348.84,153.12 L348.95,151.37 L349.05,151.16 L349.15,150.17 L349.25,150.00 L349.36,151.66 L349.46,149.94 L349.56,152.40 L349.67,153.65 L349.77,152.59 L349.87,149.82 L349.97,153.72 L350.08,154.98 L350.18,152.23 L350.28,153.12 L350.39,157.40 L350.49,155.58 L350.59,154.59 L350.69,156.57 L350.80,154.96 L350.90,156.57 L351.00,154.79 L351.10,152.28 L351.20,151.27 L351.30,150.44 L351.40,152.32 L351.50,149.70 L351.60,150.66 L351.70,151.56 L351.80,151.08 L351.90,151.33 L352.00,150.24 L352.10,148.13 L352.20,150.56 L352.30,149.15 L352.40,148.98 L352.50,146.38 L352.60,146.88 L352.70,149.58 L352.80,144.29 L352.90,144.96 L353.00,146.70 L353.10,143.70 L353.20,143.23 L353.30,139.46 L353.40,143.64 L353.50,141.36 L353.60,140.62 L353.70,141.83 L353.80,138.81 L353.90,136.29 L354.00,136.03 L354.10,137.04 L354.20,136.98 L354.30,135.69 L354.40,133.73 L354.50,135.01 L354.60,133.67 L354.70,133.39 L354.80,133.56 L354.90,131.61 L355.00,132.60 L355.10,130.52 L355.20,130.32 L355.30,129.46 L355.40,131.04 L355.50,130.65 L355.60,128.30 L355.70,124.98 L355.80,125.69 L355.90,126.25 L356.00,125.08 L356.10,120.30 L356.20,122.28 L356.30,120.37 L356.40,121.20 L356.50,118.97 L356.60,116.95 L356.70,119.37 L356.80,116.95 L356.90,116.08 L357.00,116.63 L357.10,115.45 L357.20,115.35 L357.30,115.12 L357.40,116.22 L357.50,118.29 L357.60,116.63 L357.70,113.02 L357.80,113.76 L357.90,112.26 L358.00,112.71 L358.10,110.59 L358.20,111.05 L358.30,107.69 L358.40,111.64 L358.50,106.23 L358.60,107.58 L358.70,105.84 L358.80,106.76 L358.90,104.45 L359.00,105.18 L359.10,105.73 L359.21,107.78 L359.31,104.21 L359.42,106.68 L359.53,105.11 L359.63,106.07 L359.74,105.36 L359.85,107.38 L359.95,110.07 L360.06,107.66 L360.17,108.11 L360.27,109.18 L360.38,111.45 L360.49,110.80 L360.59,112.68 L360.70,112.93 L360.80,111.87 L360.90,112.73 L361.00,110.11 L361.10,109.76 L361.20,103.89 L361.30,104.22 L361.40,103.19 L361.50,101.68 L361.60,105.47 L361.70,100.33 L361.80,99.88 L361.90,100.03 L362.00,101.46 L362.10,98.31 L362.20,99.02 L362.30,96.54 L362.40,92.40 L362.50,88.31 L362.60,89.38 L362.70,88.25 L362.80,94.94 L362.90,87.31 L363.00,84.92 L363.10,87.71 L363.20,85.39 L363.30,83.98 L363.40,85.38 L363.50,84.00 L363.60,84.96 L363.70,82.99 L363.80,82.60 L363.90,79.09 L364.00,75.12 L364.10,79.64 L364.20,73.81 L364.30,77.01 L364.40,76.81 L364.50,73.42 L364.60,75.08 L364.70,75.81 L364.80,74.58 L364.90,76.39 L365.00,74.90 L365.10,74.48 L365.20,73.22 L365.30,75.10 L365.40,74.49 L365.50,76.21 L365.60,78.16 L365.70,77.88 L365.80,77.34 L365.90,75.03 L366.00,77.58 L366.10,78.08 L366.20,79.39 L366.30,71.81 L366.41,77.50 L366.51,78.29 L366.62,77.19 L366.73,79.94 L366.83,77.91 L366.94,81.46 L367.05,82.52 L367.15,80.42 L367.26,83.61 L367.37,84.20 L367.47,81.36 L367.58,85.25 L367.69,86.19 L367.79,86.18 L367.90,86.52 L368.00,87.99 L368.10,88.33 L368.20,88.12 L368.30,90.52 L368.40,86.73 L368.50,88.61 L368.60,88.49 L368.70,91.41 L368.80,91.88 L368.90,88.16 L369.00,90.63 L369.10,91.10 L369.20,91.14 L369.30,90.05 L369.40,88.69 L369.50,93.93 L369.60,94.73 L369.70,93.24 L369.80,94.77 L369.90,95.14 L370.00,92.44 L370.10,96.27 L370.20,98.13 L370.30,95.64 L370.40,95.36 L370.50,100.89 L370.60,97.82 L370.70,99.10 L370.80,98.90 L370.90,100.21 L371.00,97.73 L371.10,100.60 L371.20,99.63 L371.30,98.61 L371.40,100.93 L371.50,100.80 L371.60,101.88 L371.70,101.65 L371.80,102.62 L371.90,101.25 L372.00,103.39 L372.10,102.17 L372.20,103.07 L372.30,102.75 L372.40,103.62 L372.50,104.34 L372.60,103.45 L372.70,103.10 L372.80,104.40 L372.90,106.72 L373.00,106.68 L373.10,106.70 L373.20,107.64 L373.30,110.55 L373.40,107.17 L373.50,105.94 L373.60,108.97 L373.70,106.63 L373.80,104.69 L373.90,108.83 L374.00,107.57 L374.10,105.66 L374.20,107.73 L374.30,106.96 L374.40,104.70 L374.50,101.61 L374.60,104.54 L374.70,103.16 L374.80,102.10 L374.90,102.96 L375.00,102.40 L375.10,103.54 L375.20,104.69 L375.30,100.11 L375.40,103.31 L375.50,100.33 L375.60,101.55 L375.70,100.51 L375.80,101.22 L375.90,97.96 L376.00,100.08 L376.10,98.09 L376.20,100.49 L376.31,98.70 L376.41,100.34 L376.52,102.18 L376.62,100.07 L376.72,100.51 L376.83,103.32 L376.93,105.11 L377.04,106.35 L377.14,102.16 L377.24,103.47 L377.35,104.88 L377.45,106.77 L377.56,105.70 L377.66,108.82 L377.76,103.61 L377.87,108.89 L377.97,107.40 L378.08,107.22 L378.18,108.26 L378.28,108.92 L378.39,107.25 L378.49,111.10 L378.60,110.39 L378.70,109.89 L378.80,110.73 L378.90,107.28 L379.00,107.12 L379.10,105.24 L379.20,106.87 L379.30,103.68 L379.40,103.62 L379.50,101.79 L379.60,100.48 L379.70,101.29 L379.80,103.43 L379.90,99.75 L380.00,98.06 L380.10,99.39 L380.20,100.02 L380.30,98.72 L380.40,98.29 L380.50,100.35 L380.60,99.41 L380.70,97.48 L380.80,98.14 L380.90,93.44 L381.00,94.06 L381.10,92.55 L381.20,93.56 L381.30,95.33 L381.40,92.01 L381.50,92.08 L381.60,93.11 L381.70,91.20 L381.80,87.18 L381.90,85.82 L382.00,88.83 L382.10,86.72 L382.20,85.70 L382.30,83.90 L382.40,84.82 L382.50,84.32 L382.60,82.18 L382.70,81.78 L382.80,82.92 L382.90,81.56 L383.00,80.77 L383.10,80.03 L383.20,76.66 L383.30,78.72 L383.40,78.87 L383.50,77.87 L383.60,77.03 L383.70,74.64 L383.80,74.04 L383.91,76.33 L384.01,75.18 L384.12,81.22 L384.23,85.84 L384.33,85.84 L384.44,87.07 L384.55,89.32 L384.65,91.07 L384.76,90.90 L384.87,93.54 L384.97,97.45 L385.08,97.68 L385.19,101.22 L385.29,103.13 L385.40,105.43 L385.50,103.55 L385.60,103.43 L385.70,96.38 L385.80,101.78 L385.90,99.87 L386.00,99.18 L386.10,96.38 L386.20,95.62 L386.30,95.11 L386.40,93.29 L386.50,90.24 L386.60,90.05 L386.70,90.21 L386.80,89.28 L386.90,86.55 L387.00,85.41 L387.10,88.31 L387.20,86.74 L387.30,86.03 L387.40,83.36 L387.50,85.31 L387.60,83.22 L387.70,80.02 L387.80,83.79 L387.90,77.44 L388.00,81.85 L388.10,81.69 L388.20,82.36 L388.30,80.55 L388.40,83.47 L388.50,84.14 L388.60,83.81 L388.70,84.23 L388.80,89.24 L388.90,85.85 L389.00,87.86 L389.10,88.36 L389.20,88.76 L389.30,88.33 L389.40,90.49 L389.50,91.16 L389.60,94.58 L389.70,92.56 L389.80,92.55 L389.90,95.62 L390.00,98.48 L390.10,99.08 L390.20,101.49 L390.30,99.80 L390.40,102.33 L390.50,102.51 L390.60,102.23 L390.70,102.10 L390.80,101.37 L390.90,99.41 L391.00,97.98 L391.10,98.19 L391.20,94.57 L391.30,94.27 L391.40,93.12 L391.50,89.54 L391.60,91.68 L391.70,87.17 L391.80,89.51 L391.90,88.67 L392.00,90.38 L392.10,91.33 L392.20,89.62 L392.30,89.08 L392.40,87.65 L392.50,86.33 L392.60,85.51 L392.70,86.17 L392.80,86.57 L392.90,83.85 L393.00,86.99 L393.10,87.12 L393.20,87.06 L393.30,87.76 L393.40,85.96 L393.50,83.92 L393.60,86.04 L393.70,86.02 L393.80,87.23 L393.90,88.41 L394.00,90.23 L394.10,87.87" stroke="#007f00" stroke-width="1.35" fill="none" stroke-linejoin="round" clip-path="url(#ax)"/><line x1="60.599999999999994" y1="323.2" x2="394" y2="99.60000000000002" stroke="#0000ff" stroke-width="1.1"/><rect x="60.5" y="36.5" width="371.5" height="288.5" fill="none" stroke="#000" stroke-width="1"/><text x="60.5" y="339" text-anchor="middle" font-family="Liberation Sans" font-size="13" letter-spacing="1.2" fill="#000">0</text><text x="101.8" y="339" text-anchor="middle" font-family="Liberation Sans" font-size="13" letter-spacing="1.2" fill="#000">500</text><text x="143.1" y="339" text-anchor="middle" font-family="Liberation Sans" font-size="13" letter-spacing="1.2" fill="#000">1000</text><text x="184.4" y="339" text-anchor="middle" font-family="Liberation Sans" font-size="13" letter-spacing="1.2" fill="#000">1500</text><text x="225.7" y="339" text-anchor="middle" font-family="Liberation Sans" font-size="13" letter-spacing="1.2" fill="#000">2000</text><text x="267.1" y="339" text-anchor="middle" font-family="Liberation Sans" font-size="13" letter-spacing="1.2" fill="#000">2500</text><text x="308.4" y="339" text-anchor="middle" font-family="Liberation Sans" font-size="13" letter-spacing="1.2" fill="#000">3000</text><text x="349.7" y="339" text-anchor="middle" font-family="Liberation Sans" font-size="13" letter-spacing="1.2" fill="#000">3500</text><text x="391.0" y="339" text-anchor="middle" font-family="Liberation Sans" font-size="13" letter-spacing="1.2" fill="#000">4000</text><text x="432.3" y="339" text-anchor="middle" font-family="Liberation Sans" font-size="13" letter-spacing="1.2" fill="#000">4500</text><text x="56" y="329.8" text-anchor="end" font-family="Liberation Sans" font-size="13" letter-spacing="1.0" fill="#000">−0.5</text><text x="56" y="271.9" text-anchor="end" font-family="Liberation Sans" font-size="13" letter-spacing="1.0" fill="#000">0.0</text><text x="56" y="214.1" text-anchor="end" font-family="Liberation Sans" font-size="13" letter-spacing="1.0" fill="#000">0.5</text><text x="56" y="156.2" text-anchor="end" font-family="Liberation Sans" font-size="13" letter-spacing="1.0" fill="#000">1.0</text><text x="56" y="98.4" text-anchor="end" font-family="Liberation Sans" font-size="13" letter-spacing="1.0" fill="#000">1.5</text><text x="56" y="40.5" text-anchor="end" font-family="Liberation Sans" font-size="13" letter-spacing="1.0" fill="#000">2.0</text><text x="245" y="357" text-anchor="middle" font-family="Liberation Sans" font-size="13" letter-spacing="1.2" fill="#000">intdate</text></svg></body></html>
